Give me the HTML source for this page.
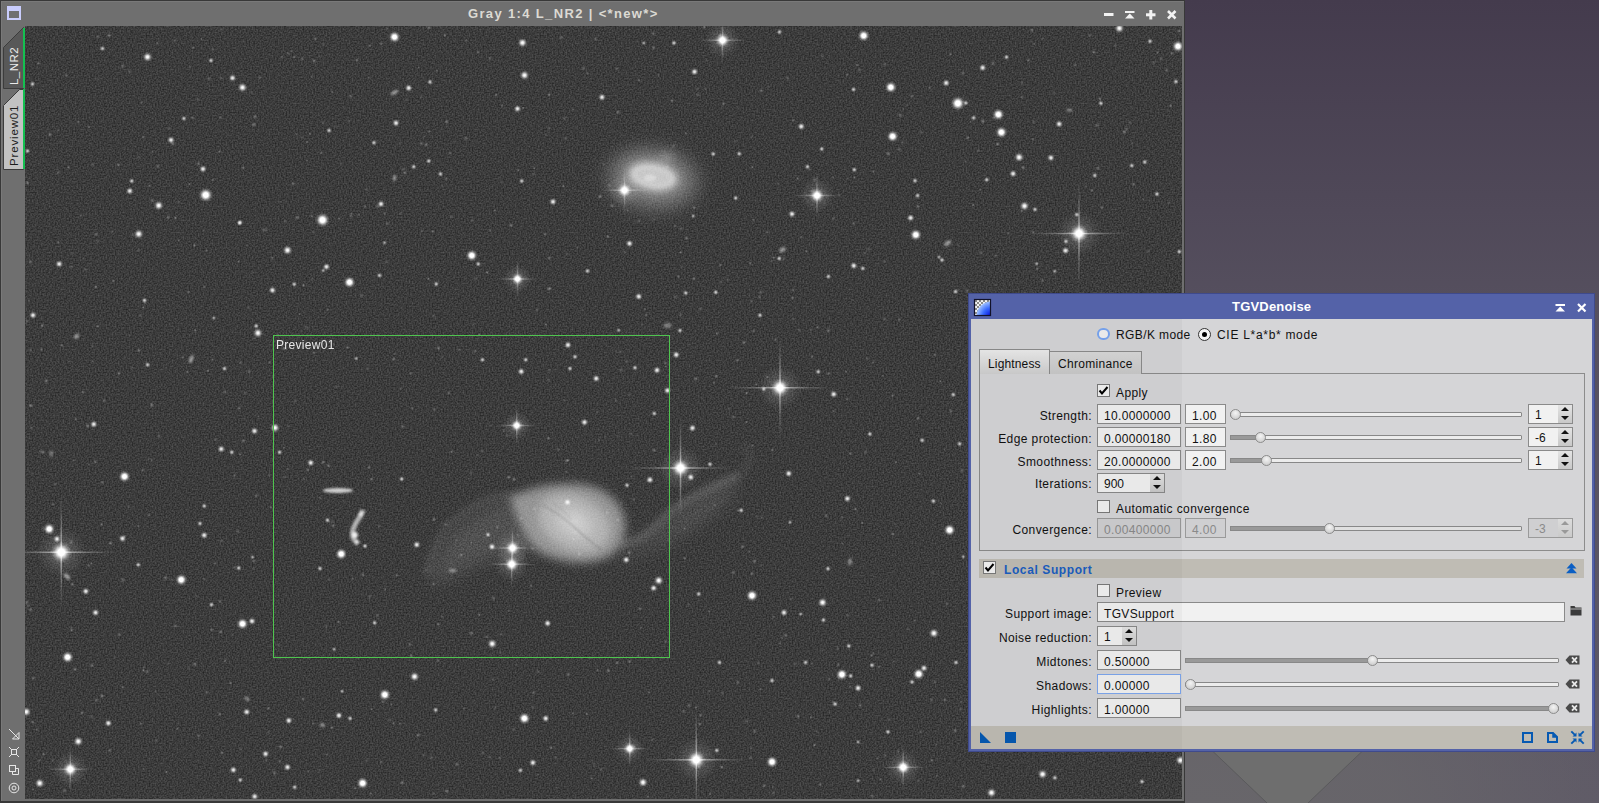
<!DOCTYPE html>
<html><head><meta charset="utf-8">
<style>
*{box-sizing:border-box;margin:0;padding:0}
html,body{width:1599px;height:803px;overflow:hidden}
body{position:relative;font-family:"Liberation Sans",sans-serif;font-size:12px;color:#111;
 background:radial-gradient(ellipse 480px 230px at 1200px 803px,rgba(104,102,106,1) 0%,rgba(104,102,106,0.85) 40%,rgba(104,102,106,0) 100%),linear-gradient(180deg,#443b4d 0px,#554f5e 300px,#5b5664 600px,#5d5866 803px)}
.a{position:absolute}
#bgshade{left:1185px;top:600px;width:414px;height:203px;background:linear-gradient(180deg,rgba(106,104,108,0) 0%,rgba(106,104,108,0.0) 30%,rgba(106,104,108,1) 100%)}
#win{left:0;top:0;width:1185px;height:803px;background:#6f6f6f;border:1px solid #383838;border-bottom-width:2px;box-shadow:inset 1px 1px 0 #797979}
#wtitle{left:468px;top:6px;font-weight:bold;font-size:13px;color:#dcdad4;white-space:nowrap;letter-spacing:1.35px}
#img{position:absolute;left:25px;top:26px}
.wb{background:#f2f2f2}
.lbl{position:absolute;white-space:nowrap;letter-spacing:0.4px}
.r{text-align:right}
#dlg{left:968px;top:293px;width:627px;height:459px;background:#5462a8;border:1px solid #3f4a8c}
#dcontent{left:971px;top:319px;width:621px;height:430px;background:#d5d5d7}
#dfoot{left:971px;top:726px;width:621px;height:23px;background:#bfbcb4}
.tf{position:absolute;height:20px;background:#f1f1f1;border:1px solid #8a8a8a;padding-left:6px;padding-top:2px;line-height:18px;letter-spacing:0.35px}
.tf.dis{background:#cfcfd1;color:#8a8a8a;border-color:#9a9a9a}
.trk{position:absolute;height:5px;background:#ececec;border:1px solid #888;border-radius:1px}
.fill{position:absolute;height:5px;background:#999;border:1px solid #888}
.hnd{position:absolute;width:11px;height:11px;border-radius:50%;background:radial-gradient(circle at 50% 35%,#f4f4f4,#c4c4c4);border:1px solid #8c8c8c}
.spin{position:absolute;height:20px;background:#f1f1f1;border:1px solid #8a8a8a;padding-left:6px;padding-top:1px;line-height:18px}
.spb{position:absolute;top:0;right:0;width:14px;height:18px;background:linear-gradient(#e4e4e4,#c8c8c8)}
.up{position:absolute;left:3px;top:2px;width:0;height:0;border-left:4px solid transparent;border-right:4px solid transparent;border-bottom:4px solid #111}
.dn{position:absolute;left:3px;top:11px;width:0;height:0;border-left:4px solid transparent;border-right:4px solid transparent;border-top:4px solid #111}
.cb{position:absolute;width:13px;height:13px;background:#f2f2f2;border:1px solid #7a7a7a}
.clr{position:absolute;width:15px;height:10px}
</style></head><body>

<svg class="a" style="left:1185px;top:751px" width="414" height="52" viewBox="1185 751 414 52">
 <polygon points="1212.5,751 1362.5,751 1308,803 1267,803" fill="#6e6e6e"/>
 <polyline points="1212.5,751 1267,803" stroke="#5a5a5c" stroke-width="1" fill="none"/>
 <polyline points="1362.5,751 1308,803" stroke="#5a5a5c" stroke-width="1" fill="none"/>
</svg>

<div class="a" id="win"></div>
<!-- window title icon -->
<div class="a" style="left:7px;top:6px;width:14px;height:14px;background:#c9cdfd"></div>
<div class="a" style="left:9px;top:11px;width:10px;height:7px;background:#6f6f72"></div>
<div class="a" id="wtitle">Gray 1:4 L_NR2 | &lt;*new*&gt;</div>
<!-- window buttons -->
<svg class="a" style="left:1100px;top:6px" width="84" height="18" viewBox="1100 6 84 18">
 <rect x="1104" y="13" width="9.5" height="3" fill="#f2f2f2"/>
 <rect x="1125" y="11" width="9.5" height="2" fill="#f2f2f2"/>
 <polygon points="1125,18.5 1134.5,18.5 1129.75,13.5" fill="#f2f2f2"/>
 <rect x="1146" y="13.3" width="9.5" height="3" fill="#f2f2f2"/>
 <rect x="1149.3" y="10" width="3" height="9.5" fill="#f2f2f2"/>
 <path d="M1168,11 L1175.5,18.5 M1175.5,11 L1168,18.5" stroke="#f2f2f2" stroke-width="2.6"/>
</svg>
<!-- side tabs -->
<svg class="a" style="left:0;top:26px" width="26" height="150" viewBox="0 26 26 150">
 <polygon points="3.5,88.5 3.5,47.5 23.5,27.5 23.5,88.5" fill="#585858" stroke="#3c3c3c" stroke-width="1"/>
 <polygon points="3.5,169.5 3.5,105.5 19.5,89.5 23.5,89.5 23.5,169.5" fill="#c2c2c2" stroke="#3c3c3c" stroke-width="1"/>
 <rect x="23" y="28" width="2" height="60" fill="#14c050"/>
 <rect x="23" y="89" width="2" height="80" fill="#14c050"/>
</svg>
<div class="a" style="left:3px;top:85.5px;width:72px;height:22px;transform-origin:0 0;transform:rotate(-90deg);color:#ececec;font-size:11.5px;line-height:22px;padding-left:1px;letter-spacing:0.45px">L_NR2</div>
<div class="a" style="left:3px;top:167px;width:80px;height:22px;transform-origin:0 0;transform:rotate(-90deg);color:#1c1c1c;font-size:11.5px;line-height:22px;padding-left:1px;letter-spacing:0.85px">Preview01</div>
<!-- bottom-left tool icons -->
<svg class="a" style="left:4px;top:724px" width="20" height="74" viewBox="4 724 20 74" fill="none" stroke="#e6e6e6" stroke-width="1">
 <path d="M9,729 L19,739 M19,732.5 L19,739 L12.5,739 Z"/>
 <rect x="11.5" y="749.5" width="5" height="5"/>
 <path d="M9,747 L11.5,749.5 M19,747 L16.5,749.5 M9,757 L11.5,754.5 M19,757 L16.5,754.5"/>
 <rect x="9.5" y="765.5" width="6" height="6"/>
 <path d="M15.5,768.5 L18.5,768.5 L18.5,774.5 L12.5,774.5 L12.5,771.5"/>
 <circle cx="14" cy="788" r="4.8"/>
 <circle cx="14" cy="788" r="2"/>
</svg>
<svg id="img" width="1157" height="773" viewBox="25 26 1157 773">
<defs>
 <radialGradient id="sg"><stop offset="0" stop-color="#fff"/><stop offset="0.2" stop-color="#fff" stop-opacity="0.92"/><stop offset="0.4" stop-color="#fff" stop-opacity="0.6"/><stop offset="0.6" stop-color="#fff" stop-opacity="0.28"/><stop offset="0.8" stop-color="#fff" stop-opacity="0.08"/><stop offset="1" stop-color="#fff" stop-opacity="0"/></radialGradient>
 <radialGradient id="sgb"><stop offset="0" stop-color="#fff"/><stop offset="0.3" stop-color="#fff"/><stop offset="0.45" stop-color="#fff" stop-opacity="0.7"/><stop offset="0.65" stop-color="#fff" stop-opacity="0.28"/><stop offset="0.85" stop-color="#fff" stop-opacity="0.07"/><stop offset="1" stop-color="#fff" stop-opacity="0"/></radialGradient>
 <radialGradient id="halo"><stop offset="0" stop-color="#fff" stop-opacity="0.22"/><stop offset="1" stop-color="#fff" stop-opacity="0"/></radialGradient>
 <linearGradient id="sph"><stop offset="0" stop-color="#fff" stop-opacity="0"/><stop offset="0.2" stop-color="#fff" stop-opacity="0.2"/><stop offset="0.4" stop-color="#fff" stop-opacity="0.5"/><stop offset="0.5" stop-color="#fff"/><stop offset="0.6" stop-color="#fff" stop-opacity="0.5"/><stop offset="0.8" stop-color="#fff" stop-opacity="0.2"/><stop offset="1" stop-color="#fff" stop-opacity="0"/></linearGradient>
 <linearGradient id="spv" x1="0" y1="0" x2="0" y2="1"><stop offset="0" stop-color="#fff" stop-opacity="0"/><stop offset="0.2" stop-color="#fff" stop-opacity="0.2"/><stop offset="0.4" stop-color="#fff" stop-opacity="0.5"/><stop offset="0.5" stop-color="#fff"/><stop offset="0.6" stop-color="#fff" stop-opacity="0.5"/><stop offset="0.8" stop-color="#fff" stop-opacity="0.2"/><stop offset="1" stop-color="#fff" stop-opacity="0"/></linearGradient>
 <filter id="blur1" x="-50%" y="-50%" width="200%" height="200%"><feGaussianBlur stdDeviation="1"/></filter>
 <filter id="blur3" x="-50%" y="-50%" width="200%" height="200%"><feGaussianBlur stdDeviation="3"/></filter>
 <filter id="blur4" x="-50%" y="-50%" width="200%" height="200%"><feGaussianBlur stdDeviation="5"/></filter>
 <filter id="blur6" x="-50%" y="-50%" width="200%" height="200%"><feGaussianBlur stdDeviation="8"/></filter>
 <filter id="noise" x="0" y="0" width="100%" height="100%" color-interpolation-filters="sRGB"><feTurbulence type="fractalNoise" baseFrequency="0.65" numOctaves="1" seed="4"/><feColorMatrix type="matrix" values="0.62 0 0 0 -0.067  0.62 0 0 0 -0.067  0.62 0 0 0 -0.067  0 0 0 0 0.5"/><feGaussianBlur stdDeviation="0.7"/></filter>
</defs>
<rect x="25" y="26" width="1157" height="773" fill="#3a3a3a"/>
<rect x="25" y="26" width="1157" height="773" filter="url(#noise)"/>

<!-- top galaxy -->
<g filter="url(#blur6)">
 <ellipse cx="653" cy="179" rx="48" ry="33" fill="#fff" opacity="0.2" transform="rotate(6 653 179)"/>
 <ellipse cx="653" cy="177" rx="32" ry="20" fill="#fff" opacity="0.3" transform="rotate(10 653 177)"/>
</g>
<g filter="url(#blur3)">
 <ellipse cx="653" cy="176.5" rx="25" ry="14" fill="#fff" opacity="0.5" transform="rotate(10 653 176.5)"/>
 <ellipse cx="667" cy="157" rx="8" ry="6" fill="#fff" opacity="0.15"/>
</g>
<g filter="url(#blur1)">
 <ellipse cx="653" cy="176.5" rx="19" ry="9" fill="none" stroke="#fff" stroke-width="5" opacity="0.12" transform="rotate(10 653 176.5)"/>
 <ellipse cx="650" cy="178" rx="6" ry="3.5" fill="#fff" opacity="0.3"/>
</g>
<!-- main galaxy arms -->
<g filter="url(#blur6)" fill="#fff" stroke="none">
 <path d="M515,499 C495,500 470,515 452,532 C440,548 432,565 430,585 C450,580 470,565 500,557 C520,552 535,550 545,553 C530,540 520,520 515,499 Z" opacity="0.11"/>
 <path d="M615,553 C640,548 660,530 680,512 C700,496 720,486 740,478 C735,500 715,515 690,530 C665,545 640,556 615,560 Z" opacity="0.10"/>
</g>
<g filter="url(#blur3)" fill="none" stroke="#fff">
 <path d="M518,497 C498,492 476,503 456,518 C440,532 432,550 427,575" stroke-width="8" opacity="0.07"/>
 <path d="M620,545 C640,542 655,528 668,514 C685,500 705,490 738,476" stroke-width="8" opacity="0.14"/>
 <path d="M735,478 C752,468 755,452 742,445" stroke-width="8" opacity="0.05"/>
</g>
<g filter="url(#blur4)">
 <path d="M510,498 C530,487 555,483 578,484 C602,486 618,498 624,516 C628,534 622,550 606,558 C588,566 562,563 543,554 C526,544 518,522 510,498 Z" fill="#fff" opacity="0.45"/>
</g>
<g filter="url(#blur4)">
 <ellipse cx="574" cy="523" rx="38" ry="27" fill="#fff" opacity="0.3" transform="rotate(25 574 523)"/>
 <ellipse cx="574" cy="523" rx="20" ry="14" fill="#fff" opacity="0.25" transform="rotate(25 574 523)"/>
 <circle cx="575" cy="522" r="5" fill="#fff" opacity="0.3"/>
</g>
<g filter="url(#blur1)" fill="none">
 <path d="M543,505 C556,512 566,520 573,526 C583,535 592,544 602,550" stroke="#000" stroke-width="1.4" opacity="0.18"/>
 <path d="M552,502 C560,508 566,513 571,519" stroke="#000" stroke-width="1.2" opacity="0.1"/>
</g>
<!-- edge-on & curved -->
<g filter="url(#blur1)">
 <ellipse cx="338" cy="490.5" rx="15" ry="2.4" fill="#fff" opacity="0.75"/>
 <path d="M363,510 C361,517 355,522 353,530 C351,537 355,541 358,544" stroke="#fff" stroke-width="5" fill="none" opacity="0.6"/>
 <circle cx="355" cy="535" r="3" fill="#fff" opacity="0.85"/><circle cx="361" cy="514" r="2.5" fill="#fff" opacity="0.6"/>
 <circle cx="357" cy="542" r="2" fill="#fff" opacity="0.7"/>
</g>
<g filter="url(#blur1)" fill="#fff">
 <ellipse cx="394.5" cy="92.5" rx="4" ry="1.8" opacity="0.5" transform="rotate(-30 394.5 92.5)"/>
 <ellipse cx="1069.4" cy="110" rx="3" ry="1.6" opacity="0.4"/>
 <ellipse cx="947.7" cy="243.2" rx="4" ry="2" opacity="0.5" transform="rotate(-35 947.7 243.2)"/>
 <ellipse cx="782.5" cy="249.75" rx="3.5" ry="2" opacity="0.5" transform="rotate(-35 782.5 249.75)"/>
 <ellipse cx="76.25" cy="336.5" rx="3" ry="2" opacity="0.5" transform="rotate(-35 76 336)"/>
 <ellipse cx="191.25" cy="359" rx="2" ry="4" opacity="0.5" transform="rotate(20 191 359)"/>
 <ellipse cx="667.5" cy="325.5" rx="4" ry="2.5" opacity="0.35"/>
 <ellipse cx="452.5" cy="570.5" rx="4" ry="1.8" opacity="0.4"/>
 <ellipse cx="850" cy="561.7" rx="2" ry="3.5" opacity="0.4"/>
 <ellipse cx="322.1" cy="725.1" rx="2.5" ry="2" opacity="0.4"/>
 <ellipse cx="247.5" cy="698.5" rx="3" ry="1.8" opacity="0.4" transform="rotate(35 247 698)"/>
 <ellipse cx="51.25" cy="453.5" rx="1.8" ry="3" opacity="0.35"/>
 <ellipse cx="394.5" cy="178" rx="1.6" ry="3" opacity="0.5"/>
 <ellipse cx="67" cy="576.5" rx="4" ry="2" opacity="0.5" transform="rotate(45 67 576.5)"/>
</g>

<circle cx="394.5" cy="37" r="6.4" fill="url(#sgb)" opacity="1.0"/>
<circle cx="147.5" cy="57" r="5.4" fill="url(#sg)" opacity="1.0"/>
<circle cx="102.5" cy="48.5" r="3.3" fill="url(#sg)" opacity="0.7"/>
<circle cx="211" cy="60.5" r="3.3" fill="url(#sg)" opacity="0.7"/>
<circle cx="232.5" cy="78" r="4.3" fill="url(#sg)" opacity="0.9"/>
<circle cx="242.5" cy="87.5" r="5.4" fill="url(#sg)" opacity="1.0"/>
<circle cx="32.5" cy="84" r="3.3" fill="url(#sg)" opacity="0.7"/>
<circle cx="408.7" cy="88" r="4.3" fill="url(#sg)" opacity="0.9"/>
<circle cx="396" cy="123" r="4.3" fill="url(#sg)" opacity="0.9"/>
<circle cx="329" cy="130.5" r="3.3" fill="url(#sg)" opacity="0.7"/>
<circle cx="374" cy="142.7" r="3.3" fill="url(#sg)" opacity="0.7"/>
<circle cx="171" cy="140" r="4.3" fill="url(#sg)" opacity="0.9"/>
<circle cx="184" cy="118.5" r="3.3" fill="url(#sg)" opacity="0.7"/>
<circle cx="27.5" cy="151" r="3.3" fill="url(#sg)" opacity="0.7"/>
<circle cx="203" cy="169" r="4.3" fill="url(#sg)" opacity="0.9"/>
<circle cx="131.75" cy="181" r="3.3" fill="url(#sg)" opacity="0.7"/>
<circle cx="129.75" cy="191" r="4.3" fill="url(#sg)" opacity="0.9"/>
<circle cx="205.75" cy="195" r="7.8" fill="url(#sgb)" opacity="1.0"/>
<circle cx="158.75" cy="205.5" r="5.4" fill="url(#sg)" opacity="1.0"/>
<circle cx="322.5" cy="220" r="7.8" fill="url(#sgb)" opacity="1.0"/>
<circle cx="413.75" cy="166.75" r="3.3" fill="url(#sg)" opacity="0.7"/>
<circle cx="381" cy="204" r="4.3" fill="url(#sg)" opacity="0.9"/>
<circle cx="240" cy="222.5" r="3.3" fill="url(#sg)" opacity="0.7"/>
<circle cx="522.5" cy="42.75" r="5.4" fill="url(#sg)" opacity="1.0"/>
<rect x="698.0" y="39.50" width="49.0" height="1.5" fill="url(#sph)" opacity="0.7"/>
<rect x="721.75" y="15.8" width="1.5" height="49.0" fill="url(#spv)" opacity="0.7"/>
<circle cx="722.5" cy="40.25" r="17.2" fill="url(#halo)"/>
<circle cx="722.5" cy="40.25" r="7.8" fill="url(#sgb)" opacity="1.0"/>
<circle cx="524.5" cy="75.25" r="5.4" fill="url(#sg)" opacity="1.0"/>
<circle cx="517.5" cy="108.75" r="4.3" fill="url(#sg)" opacity="0.9"/>
<circle cx="602" cy="97.25" r="4.3" fill="url(#sg)" opacity="0.9"/>
<circle cx="694.5" cy="71.75" r="4.3" fill="url(#sg)" opacity="0.9"/>
<circle cx="674" cy="43" r="3.3" fill="url(#sg)" opacity="0.7"/>
<circle cx="643.75" cy="43" r="2.8" fill="url(#sg)" opacity="0.55"/>
<circle cx="801.25" cy="126.5" r="4.3" fill="url(#sg)" opacity="0.9"/>
<circle cx="821.75" cy="149" r="3.3" fill="url(#sg)" opacity="0.7"/>
<circle cx="807.5" cy="166.75" r="3.3" fill="url(#sg)" opacity="0.7"/>
<rect x="792.5" y="194.75" width="49.0" height="1.5" fill="url(#sph)" opacity="0.7"/>
<rect x="816.25" y="171.0" width="1.5" height="49.0" fill="url(#spv)" opacity="0.7"/>
<circle cx="817" cy="195.5" r="17.2" fill="url(#halo)"/>
<circle cx="817" cy="195.5" r="7.8" fill="url(#sgb)" opacity="1.0"/>
<circle cx="792" cy="214" r="4.3" fill="url(#sg)" opacity="0.9"/>
<rect x="600.0" y="189.50" width="49.0" height="1.5" fill="url(#sph)" opacity="0.7"/>
<rect x="623.75" y="165.8" width="1.5" height="49.0" fill="url(#spv)" opacity="0.7"/>
<circle cx="624.5" cy="190.25" r="17.2" fill="url(#halo)"/>
<circle cx="624.5" cy="190.25" r="7.8" fill="url(#sgb)" opacity="1.0"/>
<circle cx="553" cy="201.75" r="4.3" fill="url(#sg)" opacity="0.9"/>
<circle cx="440.5" cy="174" r="3.3" fill="url(#sg)" opacity="0.7"/>
<circle cx="428.75" cy="161" r="3.3" fill="url(#sg)" opacity="0.7"/>
<circle cx="521.75" cy="181" r="3.3" fill="url(#sg)" opacity="0.7"/>
<circle cx="713.25" cy="154" r="3.3" fill="url(#sg)" opacity="0.7"/>
<circle cx="739.25" cy="153.75" r="3.3" fill="url(#sg)" opacity="0.7"/>
<circle cx="735.75" cy="198" r="3.3" fill="url(#sg)" opacity="0.7"/>
<circle cx="430" cy="82" r="3.3" fill="url(#sg)" opacity="0.7"/>
<circle cx="779.5" cy="32" r="3.3" fill="url(#sg)" opacity="0.7"/>
<circle cx="863.7" cy="35.7" r="6.4" fill="url(#sgb)" opacity="1.0"/>
<circle cx="1119.4" cy="28.3" r="5.4" fill="url(#sg)" opacity="1.0"/>
<circle cx="1178" cy="46.3" r="6.4" fill="url(#sgb)" opacity="1.0"/>
<circle cx="1150" cy="41.3" r="3.3" fill="url(#sg)" opacity="0.7"/>
<circle cx="890.8" cy="87.3" r="6.4" fill="url(#sgb)" opacity="1.0"/>
<circle cx="957.9" cy="103.3" r="7.8" fill="url(#sgb)" opacity="1.0"/>
<circle cx="965.8" cy="103" r="3.3" fill="url(#sg)" opacity="0.7"/>
<circle cx="998.4" cy="114.5" r="6.4" fill="url(#sgb)" opacity="1.0"/>
<circle cx="1001.4" cy="132.3" r="6.4" fill="url(#sgb)" opacity="1.0"/>
<circle cx="892.6" cy="136.4" r="6.4" fill="url(#sgb)" opacity="1.0"/>
<circle cx="982.7" cy="67.7" r="4.3" fill="url(#sg)" opacity="0.9"/>
<circle cx="946.2" cy="83" r="4.3" fill="url(#sg)" opacity="0.9"/>
<circle cx="1006.5" cy="57.1" r="3.3" fill="url(#sg)" opacity="0.7"/>
<circle cx="1059.2" cy="124" r="4.3" fill="url(#sg)" opacity="0.9"/>
<circle cx="1019.1" cy="157.3" r="5.4" fill="url(#sg)" opacity="1.0"/>
<circle cx="1050.9" cy="157.8" r="4.3" fill="url(#sg)" opacity="0.9"/>
<circle cx="1013.1" cy="173.7" r="4.3" fill="url(#sg)" opacity="0.9"/>
<circle cx="854.3" cy="169.7" r="3.3" fill="url(#sg)" opacity="0.7"/>
<circle cx="986.7" cy="179.8" r="3.3" fill="url(#sg)" opacity="0.7"/>
<circle cx="917.6" cy="195.6" r="3.3" fill="url(#sg)" opacity="0.7"/>
<circle cx="1094.8" cy="175.5" r="3.3" fill="url(#sg)" opacity="0.7"/>
<circle cx="1144.8" cy="162" r="3.3" fill="url(#sg)" opacity="0.7"/>
<circle cx="1131.8" cy="165.6" r="3.3" fill="url(#sg)" opacity="0.7"/>
<circle cx="1175.9" cy="81.6" r="3.3" fill="url(#sg)" opacity="0.7"/>
<circle cx="1100.9" cy="103.3" r="3.3" fill="url(#sg)" opacity="0.7"/>
<circle cx="973.6" cy="117.9" r="3.3" fill="url(#sg)" opacity="0.7"/>
<circle cx="1024.5" cy="206" r="5.4" fill="url(#sg)" opacity="1.0"/>
<circle cx="853.6" cy="89.5" r="3.3" fill="url(#sg)" opacity="0.7"/>
<circle cx="915" cy="180.7" r="3.3" fill="url(#sg)" opacity="0.7"/>
<circle cx="1157" cy="194" r="3.3" fill="url(#sg)" opacity="0.7"/>
<circle cx="138.75" cy="234" r="5.4" fill="url(#sg)" opacity="1.0"/>
<circle cx="239.5" cy="223" r="3.3" fill="url(#sg)" opacity="0.7"/>
<circle cx="287.5" cy="250.25" r="5.4" fill="url(#sg)" opacity="1.0"/>
<circle cx="326.5" cy="266.75" r="4.3" fill="url(#sg)" opacity="0.9"/>
<circle cx="323.25" cy="270.5" r="2.8" fill="url(#sg)" opacity="0.55"/>
<circle cx="349.5" cy="282.25" r="6.4" fill="url(#sgb)" opacity="1.0"/>
<circle cx="272.5" cy="290.25" r="4.3" fill="url(#sg)" opacity="0.9"/>
<circle cx="379.5" cy="275.5" r="3.3" fill="url(#sg)" opacity="0.7"/>
<circle cx="294.25" cy="284.25" r="3.3" fill="url(#sg)" opacity="0.7"/>
<circle cx="59.25" cy="264" r="4.3" fill="url(#sg)" opacity="0.9"/>
<circle cx="33" cy="315.25" r="4.3" fill="url(#sg)" opacity="0.9"/>
<circle cx="144.5" cy="300.25" r="3.3" fill="url(#sg)" opacity="0.7"/>
<circle cx="258" cy="333" r="5.4" fill="url(#sg)" opacity="1.0"/>
<circle cx="256.25" cy="326" r="3.3" fill="url(#sg)" opacity="0.7"/>
<circle cx="147.5" cy="364.75" r="3.3" fill="url(#sg)" opacity="0.7"/>
<circle cx="224.5" cy="368.5" r="3.3" fill="url(#sg)" opacity="0.7"/>
<circle cx="384.5" cy="242.75" r="2.8" fill="url(#sg)" opacity="0.55"/>
<circle cx="213.75" cy="318" r="2.8" fill="url(#sg)" opacity="0.55"/>
<circle cx="356.25" cy="358.5" r="2.8" fill="url(#sg)" opacity="0.55"/>
<circle cx="471.75" cy="255.5" r="6.4" fill="url(#sgb)" opacity="1.0"/>
<circle cx="478.25" cy="264" r="3.3" fill="url(#sg)" opacity="0.7"/>
<rect x="496.5" y="278.25" width="42.0" height="1.5" fill="url(#sph)" opacity="0.7"/>
<rect x="516.75" y="258.0" width="1.5" height="42.0" fill="url(#spv)" opacity="0.7"/>
<circle cx="517.5" cy="279" r="14.1" fill="url(#halo)"/>
<circle cx="517.5" cy="279" r="6.4" fill="url(#sgb)" opacity="1.0"/>
<circle cx="436.25" cy="284" r="3.3" fill="url(#sg)" opacity="0.7"/>
<circle cx="629.5" cy="243.5" r="4.3" fill="url(#sg)" opacity="0.9"/>
<circle cx="779.25" cy="258.5" r="3.3" fill="url(#sg)" opacity="0.7"/>
<circle cx="587.5" cy="271" r="3.3" fill="url(#sg)" opacity="0.7"/>
<circle cx="638.75" cy="296.5" r="4.3" fill="url(#sg)" opacity="0.9"/>
<circle cx="685.75" cy="293" r="3.3" fill="url(#sg)" opacity="0.7"/>
<circle cx="715.75" cy="292.25" r="3.3" fill="url(#sg)" opacity="0.7"/>
<circle cx="760" cy="315.25" r="3.3" fill="url(#sg)" opacity="0.7"/>
<circle cx="680" cy="330.5" r="3.3" fill="url(#sg)" opacity="0.7"/>
<circle cx="568" cy="345" r="4.3" fill="url(#sg)" opacity="0.9"/>
<circle cx="575" cy="356.75" r="3.3" fill="url(#sg)" opacity="0.7"/>
<circle cx="482.5" cy="359.75" r="3.3" fill="url(#sg)" opacity="0.7"/>
<circle cx="525.75" cy="359.75" r="3.3" fill="url(#sg)" opacity="0.7"/>
<circle cx="521.25" cy="371.5" r="4.3" fill="url(#sg)" opacity="0.9"/>
<circle cx="570" cy="368.5" r="3.3" fill="url(#sg)" opacity="0.7"/>
<circle cx="596.25" cy="378.5" r="4.3" fill="url(#sg)" opacity="0.9"/>
<circle cx="635" cy="367.75" r="3.3" fill="url(#sg)" opacity="0.7"/>
<circle cx="657" cy="370.25" r="4.3" fill="url(#sg)" opacity="0.9"/>
<circle cx="676.25" cy="354.75" r="4.3" fill="url(#sg)" opacity="0.9"/>
<circle cx="667.5" cy="390.5" r="4.3" fill="url(#sg)" opacity="0.9"/>
<rect x="728.0" y="387.00" width="104.0" height="1.5" fill="url(#sph)" opacity="0.85"/>
<rect x="779.25" y="335.8" width="1.5" height="104.0" fill="url(#spv)" opacity="0.85"/>
<circle cx="780" cy="387.75" r="22.0" fill="url(#halo)"/>
<circle cx="780" cy="387.75" r="10.0" fill="url(#sgb)" opacity="1.0"/>
<circle cx="763.75" cy="389" r="3.3" fill="url(#sg)" opacity="0.7"/>
<circle cx="818.25" cy="371.75" r="3.3" fill="url(#sg)" opacity="0.7"/>
<circle cx="618.75" cy="330.25" r="2.8" fill="url(#sg)" opacity="0.55"/>
<circle cx="693.25" cy="216" r="2.8" fill="url(#sg)" opacity="0.55"/>
<circle cx="915.8" cy="234.8" r="6.4" fill="url(#sgb)" opacity="1.0"/>
<circle cx="910.6" cy="217.9" r="4.3" fill="url(#sg)" opacity="0.9"/>
<rect x="1027.0" y="232.75" width="104.0" height="1.5" fill="url(#sph)" opacity="0.85"/>
<rect x="1078.25" y="181.5" width="1.5" height="104.0" fill="url(#spv)" opacity="0.85"/>
<circle cx="1079" cy="233.5" r="22.0" fill="url(#halo)"/>
<circle cx="1079" cy="233.5" r="10.0" fill="url(#sgb)" opacity="1.0"/>
<circle cx="1065.5" cy="250.6" r="4.3" fill="url(#sg)" opacity="0.9"/>
<circle cx="1076.8" cy="214.6" r="3.3" fill="url(#sg)" opacity="0.7"/>
<circle cx="1066" cy="241.4" r="3.3" fill="url(#sg)" opacity="0.7"/>
<circle cx="1035" cy="209.4" r="3.3" fill="url(#sg)" opacity="0.7"/>
<circle cx="853.8" cy="265.7" r="4.3" fill="url(#sg)" opacity="0.9"/>
<circle cx="862.8" cy="268.4" r="3.3" fill="url(#sg)" opacity="0.7"/>
<circle cx="828.4" cy="276.5" r="3.3" fill="url(#sg)" opacity="0.7"/>
<circle cx="1179.3" cy="251.7" r="3.3" fill="url(#sg)" opacity="0.7"/>
<circle cx="955.6" cy="291.6" r="3.3" fill="url(#sg)" opacity="0.7"/>
<circle cx="1054.7" cy="271.3" r="2.8" fill="url(#sg)" opacity="0.55"/>
<circle cx="1036.7" cy="263.7" r="2.8" fill="url(#sg)" opacity="0.55"/>
<circle cx="942" cy="260" r="3.3" fill="url(#sg)" opacity="0.7"/>
<circle cx="939" cy="257" r="2.8" fill="url(#sg)" opacity="0.55"/>
<rect x="2.8" y="551.50" width="117.0" height="1.5" fill="url(#sph)" opacity="0.85"/>
<rect x="60.50" y="493.8" width="1.5" height="117.0" fill="url(#spv)" opacity="0.85"/>
<circle cx="61.25" cy="552.25" r="24.8" fill="url(#halo)"/>
<circle cx="61.25" cy="552.25" r="11.2" fill="url(#sgb)" opacity="1.0"/>
<circle cx="49.25" cy="529" r="6.4" fill="url(#sgb)" opacity="1.0"/>
<circle cx="57" cy="539" r="4.3" fill="url(#sg)" opacity="0.9"/>
<circle cx="124.5" cy="476.5" r="6.4" fill="url(#sgb)" opacity="1.0"/>
<circle cx="93.75" cy="424.25" r="4.3" fill="url(#sg)" opacity="0.9"/>
<circle cx="275" cy="427.75" r="5.4" fill="url(#sg)" opacity="1.0"/>
<circle cx="254.5" cy="431" r="4.3" fill="url(#sg)" opacity="0.9"/>
<circle cx="221.25" cy="449" r="4.3" fill="url(#sg)" opacity="0.9"/>
<circle cx="231.75" cy="452.25" r="3.3" fill="url(#sg)" opacity="0.7"/>
<circle cx="279.5" cy="452.25" r="3.3" fill="url(#sg)" opacity="0.7"/>
<circle cx="310.75" cy="462.75" r="4.3" fill="url(#sg)" opacity="0.9"/>
<circle cx="401.75" cy="479" r="3.3" fill="url(#sg)" opacity="0.7"/>
<circle cx="200" cy="523.5" r="3.3" fill="url(#sg)" opacity="0.7"/>
<circle cx="204.25" cy="535.25" r="4.3" fill="url(#sg)" opacity="0.9"/>
<circle cx="122.5" cy="538.5" r="4.3" fill="url(#sg)" opacity="0.9"/>
<circle cx="181.25" cy="579.75" r="6.4" fill="url(#sgb)" opacity="1.0"/>
<circle cx="138.25" cy="564.75" r="3.3" fill="url(#sg)" opacity="0.7"/>
<circle cx="416.75" cy="544.75" r="4.3" fill="url(#sg)" opacity="0.9"/>
<circle cx="341.25" cy="554" r="6.4" fill="url(#sgb)" opacity="1.0"/>
<circle cx="327.5" cy="520.25" r="3.3" fill="url(#sg)" opacity="0.7"/>
<circle cx="204.25" cy="506" r="3.3" fill="url(#sg)" opacity="0.7"/>
<circle cx="238.75" cy="568" r="3.3" fill="url(#sg)" opacity="0.7"/>
<circle cx="252.5" cy="557.25" r="2.8" fill="url(#sg)" opacity="0.55"/>
<circle cx="320" cy="568.5" r="3.3" fill="url(#sg)" opacity="0.7"/>
<circle cx="365" cy="546" r="3.3" fill="url(#sg)" opacity="0.7"/>
<rect x="495.8" y="424.75" width="42.0" height="1.5" fill="url(#sph)" opacity="0.7"/>
<rect x="516.00" y="404.5" width="1.5" height="42.0" fill="url(#spv)" opacity="0.7"/>
<circle cx="516.75" cy="425.5" r="14.1" fill="url(#halo)"/>
<circle cx="516.75" cy="425.5" r="6.4" fill="url(#sgb)" opacity="1.0"/>
<circle cx="584.5" cy="422.25" r="4.3" fill="url(#sg)" opacity="0.9"/>
<circle cx="654.25" cy="413.5" r="3.3" fill="url(#sg)" opacity="0.7"/>
<circle cx="692.5" cy="428" r="4.3" fill="url(#sg)" opacity="0.9"/>
<rect x="628.5" y="467.25" width="104.0" height="1.5" fill="url(#sph)" opacity="0.85"/>
<rect x="679.75" y="416.0" width="1.5" height="104.0" fill="url(#spv)" opacity="0.85"/>
<circle cx="680.5" cy="468" r="22.0" fill="url(#halo)"/>
<circle cx="680.5" cy="468" r="10.0" fill="url(#sgb)" opacity="1.0"/>
<circle cx="690.75" cy="477.25" r="4.3" fill="url(#sg)" opacity="0.9"/>
<circle cx="710" cy="464.25" r="3.3" fill="url(#sg)" opacity="0.7"/>
<circle cx="788.75" cy="473.5" r="4.3" fill="url(#sg)" opacity="0.9"/>
<circle cx="650" cy="479.75" r="4.3" fill="url(#sg)" opacity="0.9"/>
<circle cx="627" cy="485.25" r="3.3" fill="url(#sg)" opacity="0.7"/>
<circle cx="567.5" cy="502.25" r="4.3" fill="url(#sg)" opacity="0.9"/>
<rect x="488.0" y="547.25" width="49.0" height="1.5" fill="url(#sph)" opacity="0.7"/>
<rect x="511.75" y="523.5" width="1.5" height="49.0" fill="url(#spv)" opacity="0.7"/>
<circle cx="512.5" cy="548" r="17.2" fill="url(#halo)"/>
<circle cx="512.5" cy="548" r="7.8" fill="url(#sgb)" opacity="1.0"/>
<rect x="487.2" y="563.50" width="49.0" height="1.5" fill="url(#sph)" opacity="0.7"/>
<rect x="511.00" y="539.8" width="1.5" height="49.0" fill="url(#spv)" opacity="0.7"/>
<circle cx="511.75" cy="564.25" r="17.2" fill="url(#halo)"/>
<circle cx="511.75" cy="564.25" r="7.8" fill="url(#sgb)" opacity="1.0"/>
<circle cx="492" cy="546.75" r="4.3" fill="url(#sg)" opacity="0.9"/>
<circle cx="488" cy="534.75" r="3.3" fill="url(#sg)" opacity="0.7"/>
<circle cx="626.25" cy="559.75" r="4.3" fill="url(#sg)" opacity="0.9"/>
<circle cx="658.75" cy="580.5" r="5.4" fill="url(#sg)" opacity="1.0"/>
<circle cx="741.25" cy="510.25" r="3.3" fill="url(#sg)" opacity="0.7"/>
<circle cx="790" cy="522.25" r="2.8" fill="url(#sg)" opacity="0.55"/>
<circle cx="949.6" cy="530" r="6.4" fill="url(#sgb)" opacity="1.0"/>
<circle cx="847.4" cy="498.6" r="4.3" fill="url(#sg)" opacity="0.9"/>
<circle cx="833.7" cy="394.2" r="4.3" fill="url(#sg)" opacity="0.9"/>
<circle cx="869.9" cy="434" r="3.3" fill="url(#sg)" opacity="0.7"/>
<circle cx="922.2" cy="440.3" r="3.3" fill="url(#sg)" opacity="0.7"/>
<circle cx="959.6" cy="443.8" r="3.3" fill="url(#sg)" opacity="0.7"/>
<circle cx="933.4" cy="501.1" r="3.3" fill="url(#sg)" opacity="0.7"/>
<circle cx="953.3" cy="394.7" r="3.3" fill="url(#sg)" opacity="0.7"/>
<circle cx="828" cy="568.7" r="3.3" fill="url(#sg)" opacity="0.7"/>
<circle cx="963.3" cy="556.7" r="2.8" fill="url(#sg)" opacity="0.55"/>
<circle cx="85.8" cy="591.3" r="4.3" fill="url(#sg)" opacity="0.9"/>
<circle cx="95.6" cy="612.6" r="4.3" fill="url(#sg)" opacity="0.9"/>
<circle cx="67.6" cy="657.2" r="6.4" fill="url(#sgb)" opacity="1.0"/>
<circle cx="242.5" cy="623.8" r="6.4" fill="url(#sgb)" opacity="1.0"/>
<circle cx="252" cy="621.2" r="4.3" fill="url(#sg)" opacity="0.9"/>
<circle cx="26.3" cy="711.8" r="5.4" fill="url(#sg)" opacity="1.0"/>
<circle cx="108.4" cy="723.2" r="4.3" fill="url(#sg)" opacity="0.9"/>
<circle cx="78.3" cy="741.4" r="5.4" fill="url(#sg)" opacity="1.0"/>
<rect x="45.8" y="768.55" width="49.0" height="1.5" fill="url(#sph)" opacity="0.7"/>
<rect x="69.55" y="744.8" width="1.5" height="49.0" fill="url(#spv)" opacity="0.7"/>
<circle cx="70.3" cy="769.3" r="17.2" fill="url(#halo)"/>
<circle cx="70.3" cy="769.3" r="7.8" fill="url(#sgb)" opacity="1.0"/>
<circle cx="39.7" cy="783.2" r="5.4" fill="url(#sg)" opacity="1.0"/>
<circle cx="246.7" cy="712" r="4.3" fill="url(#sg)" opacity="0.9"/>
<circle cx="288.8" cy="720.6" r="4.3" fill="url(#sg)" opacity="0.9"/>
<circle cx="265.6" cy="753.9" r="4.3" fill="url(#sg)" opacity="0.9"/>
<circle cx="287.5" cy="767.2" r="4.3" fill="url(#sg)" opacity="0.9"/>
<circle cx="233.4" cy="769.9" r="4.3" fill="url(#sg)" opacity="0.9"/>
<circle cx="294.7" cy="787.2" r="3.3" fill="url(#sg)" opacity="0.7"/>
<circle cx="254.7" cy="796.5" r="4.3" fill="url(#sg)" opacity="0.9"/>
<circle cx="338.9" cy="715.5" r="4.3" fill="url(#sg)" opacity="0.9"/>
<circle cx="350.1" cy="718.4" r="3.3" fill="url(#sg)" opacity="0.7"/>
<circle cx="384.8" cy="694.7" r="6.4" fill="url(#sgb)" opacity="1.0"/>
<circle cx="414.6" cy="676.6" r="5.4" fill="url(#sg)" opacity="1.0"/>
<circle cx="362.6" cy="783.2" r="6.4" fill="url(#sgb)" opacity="1.0"/>
<circle cx="374.6" cy="622.8" r="3.3" fill="url(#sg)" opacity="0.7"/>
<circle cx="342.1" cy="691.3" r="2.8" fill="url(#sg)" opacity="0.55"/>
<circle cx="334.1" cy="649.2" r="2.8" fill="url(#sg)" opacity="0.55"/>
<circle cx="211.5" cy="604.7" r="3.3" fill="url(#sg)" opacity="0.7"/>
<circle cx="240.3" cy="780" r="3.3" fill="url(#sg)" opacity="0.7"/>
<circle cx="752" cy="595.6" r="6.4" fill="url(#sgb)" opacity="1.0"/>
<circle cx="822.6" cy="602.5" r="5.4" fill="url(#sg)" opacity="1.0"/>
<circle cx="784" cy="612.6" r="4.3" fill="url(#sg)" opacity="0.9"/>
<circle cx="492.2" cy="643.8" r="5.4" fill="url(#sg)" opacity="1.0"/>
<circle cx="547.6" cy="623.3" r="4.3" fill="url(#sg)" opacity="0.9"/>
<circle cx="524.4" cy="718.4" r="6.4" fill="url(#sgb)" opacity="1.0"/>
<circle cx="545.7" cy="718.4" r="4.3" fill="url(#sg)" opacity="0.9"/>
<rect x="608.7" y="747.85" width="42.0" height="1.5" fill="url(#sph)" opacity="0.7"/>
<rect x="628.95" y="727.6" width="1.5" height="42.0" fill="url(#spv)" opacity="0.7"/>
<circle cx="629.7" cy="748.6" r="14.1" fill="url(#halo)"/>
<circle cx="629.7" cy="748.6" r="6.4" fill="url(#sgb)" opacity="1.0"/>
<rect x="644.3" y="759.05" width="104.0" height="1.5" fill="url(#sph)" opacity="0.85"/>
<rect x="695.55" y="707.8" width="1.5" height="104.0" fill="url(#spv)" opacity="0.85"/>
<circle cx="696.3" cy="759.8" r="22.0" fill="url(#halo)"/>
<circle cx="696.3" cy="759.8" r="10.0" fill="url(#sgb)" opacity="1.0"/>
<circle cx="772" cy="761.9" r="6.4" fill="url(#sgb)" opacity="1.0"/>
<circle cx="643" cy="782.4" r="5.4" fill="url(#sg)" opacity="1.0"/>
<circle cx="532.9" cy="762.7" r="4.3" fill="url(#sg)" opacity="0.9"/>
<circle cx="520.4" cy="770.4" r="3.3" fill="url(#sg)" opacity="0.7"/>
<circle cx="716.8" cy="750.4" r="3.3" fill="url(#sg)" opacity="0.7"/>
<circle cx="435.7" cy="709.9" r="3.3" fill="url(#sg)" opacity="0.7"/>
<circle cx="653.6" cy="588.1" r="4.3" fill="url(#sg)" opacity="0.9"/>
<circle cx="698.7" cy="594" r="3.3" fill="url(#sg)" opacity="0.7"/>
<circle cx="719.5" cy="662.5" r="3.3" fill="url(#sg)" opacity="0.7"/>
<circle cx="772" cy="680.6" r="3.3" fill="url(#sg)" opacity="0.7"/>
<circle cx="805.6" cy="662.5" r="3.3" fill="url(#sg)" opacity="0.7"/>
<circle cx="800.7" cy="614" r="2.8" fill="url(#sg)" opacity="0.55"/>
<circle cx="823.5" cy="620.1" r="3.3" fill="url(#sg)" opacity="0.7"/>
<circle cx="933.9" cy="633.2" r="5.4" fill="url(#sg)" opacity="1.0"/>
<circle cx="841.9" cy="674.5" r="6.4" fill="url(#sgb)" opacity="1.0"/>
<circle cx="850.7" cy="675.9" r="3.3" fill="url(#sg)" opacity="0.7"/>
<circle cx="858.1" cy="688.1" r="4.3" fill="url(#sg)" opacity="0.9"/>
<circle cx="835.2" cy="704.1" r="3.3" fill="url(#sg)" opacity="0.7"/>
<circle cx="918.7" cy="674" r="6.4" fill="url(#sgb)" opacity="1.0"/>
<circle cx="924" cy="668.1" r="4.3" fill="url(#sg)" opacity="0.9"/>
<circle cx="912" cy="682" r="3.3" fill="url(#sg)" opacity="0.7"/>
<circle cx="848.8" cy="646" r="3.3" fill="url(#sg)" opacity="0.7"/>
<circle cx="872" cy="665.2" r="3.3" fill="url(#sg)" opacity="0.7"/>
<circle cx="956" cy="662.5" r="3.3" fill="url(#sg)" opacity="0.7"/>
<circle cx="888" cy="731.9" r="3.3" fill="url(#sg)" opacity="0.7"/>
<rect x="878.7" y="766.55" width="49.0" height="1.5" fill="url(#sph)" opacity="0.7"/>
<rect x="902.45" y="742.8" width="1.5" height="49.0" fill="url(#spv)" opacity="0.7"/>
<circle cx="903.2" cy="767.3" r="17.2" fill="url(#halo)"/>
<circle cx="903.2" cy="767.3" r="7.8" fill="url(#sgb)" opacity="1.0"/>
<circle cx="858.1" cy="742" r="2.8" fill="url(#sg)" opacity="0.55"/>
<circle cx="858.1" cy="780.7" r="2.8" fill="url(#sg)" opacity="0.55"/>
<circle cx="991.5" cy="792.7" r="5.4" fill="url(#sg)" opacity="1.0"/>
<circle cx="1042.6" cy="774.2" r="5.4" fill="url(#sg)" opacity="1.0"/>
<circle cx="1054.9" cy="777.8" r="3.3" fill="url(#sg)" opacity="0.7"/>
<circle cx="1142" cy="781.6" r="3.3" fill="url(#sg)" opacity="0.7"/>
<circle cx="1180.4" cy="760.3" r="5.4" fill="url(#sg)" opacity="1.0"/>
<circle cx="400.0" cy="143.3" r="2.6" fill="url(#sg)" opacity="0.13"/>
<circle cx="644.9" cy="308.9" r="1.9" fill="url(#sg)" opacity="0.21"/>
<circle cx="69.3" cy="361.3" r="1.9" fill="url(#sg)" opacity="0.14"/>
<circle cx="516.3" cy="664.5" r="1.9" fill="url(#sg)" opacity="0.16"/>
<circle cx="750.7" cy="757.7" r="2.5" fill="url(#sg)" opacity="0.19"/>
<circle cx="1153.6" cy="62.9" r="2.8" fill="url(#sg)" opacity="0.17"/>
<circle cx="192.6" cy="117.8" r="2.2" fill="url(#sg)" opacity="0.27"/>
<circle cx="234.7" cy="475.4" r="2.6" fill="url(#sg)" opacity="0.19"/>
<circle cx="658.6" cy="75.4" r="1.9" fill="url(#sg)" opacity="0.16"/>
<circle cx="811.9" cy="356.7" r="2.2" fill="url(#sg)" opacity="0.23"/>
<circle cx="549.4" cy="258.1" r="2.8" fill="url(#sg)" opacity="0.25"/>
<circle cx="307.9" cy="469.9" r="2.4" fill="url(#sg)" opacity="0.28"/>
<circle cx="868.5" cy="249.0" r="3.0" fill="url(#sg)" opacity="0.14"/>
<circle cx="508.9" cy="610.8" r="2.0" fill="url(#sg)" opacity="0.21"/>
<circle cx="71.3" cy="542.2" r="2.7" fill="url(#sg)" opacity="0.22"/>
<circle cx="1037.2" cy="268.9" r="2.6" fill="url(#sg)" opacity="0.23"/>
<circle cx="695.8" cy="378.7" r="2.8" fill="url(#sg)" opacity="0.29"/>
<circle cx="573.6" cy="539.1" r="1.9" fill="url(#sg)" opacity="0.25"/>
<circle cx="773.4" cy="792.7" r="2.8" fill="url(#sg)" opacity="0.17"/>
<circle cx="471.6" cy="542.5" r="1.8" fill="url(#sg)" opacity="0.20"/>
<circle cx="220.1" cy="117.3" r="1.9" fill="url(#sg)" opacity="0.26"/>
<circle cx="175.4" cy="217.9" r="2.3" fill="url(#sg)" opacity="0.28"/>
<circle cx="119.1" cy="373.3" r="2.5" fill="url(#sg)" opacity="0.28"/>
<circle cx="347.6" cy="347.2" r="2.2" fill="url(#sg)" opacity="0.28"/>
<circle cx="1132.2" cy="143.4" r="2.0" fill="url(#sg)" opacity="0.16"/>
<circle cx="295.5" cy="400.9" r="2.5" fill="url(#sg)" opacity="0.17"/>
<circle cx="30.7" cy="350.0" r="2.2" fill="url(#sg)" opacity="0.22"/>
<circle cx="621.4" cy="503.2" r="2.6" fill="url(#sg)" opacity="0.13"/>
<circle cx="479.2" cy="334.6" r="1.9" fill="url(#sg)" opacity="0.23"/>
<circle cx="97.9" cy="78.9" r="2.1" fill="url(#sg)" opacity="0.15"/>
<circle cx="418.8" cy="67.5" r="1.8" fill="url(#sg)" opacity="0.15"/>
<circle cx="143.2" cy="307.3" r="1.8" fill="url(#sg)" opacity="0.28"/>
<circle cx="735.2" cy="141.5" r="2.1" fill="url(#sg)" opacity="0.18"/>
<circle cx="446.6" cy="121.7" r="2.8" fill="url(#sg)" opacity="0.30"/>
<circle cx="564.2" cy="400.0" r="1.9" fill="url(#sg)" opacity="0.14"/>
<circle cx="421.7" cy="231.1" r="2.8" fill="url(#sg)" opacity="0.15"/>
<circle cx="52.7" cy="760.2" r="2.4" fill="url(#sg)" opacity="0.15"/>
<circle cx="653.4" cy="47.8" r="2.4" fill="url(#sg)" opacity="0.30"/>
<circle cx="327.6" cy="309.7" r="2.0" fill="url(#sg)" opacity="0.26"/>
<circle cx="641.1" cy="627.7" r="2.2" fill="url(#sg)" opacity="0.16"/>
<circle cx="963.3" cy="786.4" r="2.8" fill="url(#sg)" opacity="0.27"/>
<circle cx="287.9" cy="426.1" r="2.2" fill="url(#sg)" opacity="0.13"/>
<circle cx="58.3" cy="242.4" r="2.1" fill="url(#sg)" opacity="0.24"/>
<circle cx="280.6" cy="201.9" r="2.0" fill="url(#sg)" opacity="0.16"/>
<circle cx="746.8" cy="721.1" r="2.8" fill="url(#sg)" opacity="0.21"/>
<circle cx="780.2" cy="643.5" r="1.9" fill="url(#sg)" opacity="0.24"/>
<circle cx="892.4" cy="395.6" r="2.0" fill="url(#sg)" opacity="0.26"/>
<circle cx="410.1" cy="644.4" r="3.0" fill="url(#sg)" opacity="0.19"/>
<circle cx="489.6" cy="757.0" r="2.7" fill="url(#sg)" opacity="0.15"/>
<circle cx="172.7" cy="143.5" r="2.9" fill="url(#sg)" opacity="0.27"/>
<circle cx="194.8" cy="664.2" r="3.0" fill="url(#sg)" opacity="0.24"/>
<circle cx="430.7" cy="450.0" r="2.0" fill="url(#sg)" opacity="0.12"/>
<circle cx="634.2" cy="746.8" r="2.3" fill="url(#sg)" opacity="0.28"/>
<circle cx="980.2" cy="189.7" r="2.1" fill="url(#sg)" opacity="0.17"/>
<circle cx="303.8" cy="479.1" r="2.1" fill="url(#sg)" opacity="0.20"/>
<circle cx="177.4" cy="728.6" r="2.2" fill="url(#sg)" opacity="0.20"/>
<circle cx="699.8" cy="724.2" r="2.3" fill="url(#sg)" opacity="0.29"/>
<circle cx="605.4" cy="437.0" r="2.4" fill="url(#sg)" opacity="0.12"/>
<circle cx="534.3" cy="168.2" r="1.8" fill="url(#sg)" opacity="0.26"/>
<circle cx="225.1" cy="392.1" r="2.7" fill="url(#sg)" opacity="0.22"/>
<circle cx="402.5" cy="426.6" r="2.5" fill="url(#sg)" opacity="0.26"/>
<circle cx="148.6" cy="459.0" r="2.1" fill="url(#sg)" opacity="0.17"/>
<circle cx="918.0" cy="418.4" r="2.5" fill="url(#sg)" opacity="0.26"/>
<circle cx="733.5" cy="416.8" r="2.4" fill="url(#sg)" opacity="0.24"/>
<circle cx="548.5" cy="438.2" r="2.4" fill="url(#sg)" opacity="0.29"/>
<circle cx="833.6" cy="702.8" r="2.9" fill="url(#sg)" opacity="0.17"/>
<circle cx="672.2" cy="754.3" r="2.8" fill="url(#sg)" opacity="0.14"/>
<circle cx="166.5" cy="367.9" r="1.9" fill="url(#sg)" opacity="0.16"/>
<circle cx="110.5" cy="543.2" r="2.7" fill="url(#sg)" opacity="0.28"/>
<circle cx="204.4" cy="579.1" r="2.6" fill="url(#sg)" opacity="0.15"/>
<circle cx="279.6" cy="761.4" r="2.3" fill="url(#sg)" opacity="0.21"/>
<circle cx="212.5" cy="359.7" r="2.4" fill="url(#sg)" opacity="0.18"/>
<circle cx="252.1" cy="272.6" r="2.7" fill="url(#sg)" opacity="0.12"/>
<circle cx="665.9" cy="366.6" r="1.8" fill="url(#sg)" opacity="0.18"/>
<circle cx="746.6" cy="422.0" r="1.9" fill="url(#sg)" opacity="0.30"/>
<circle cx="936.6" cy="776.2" r="1.9" fill="url(#sg)" opacity="0.17"/>
<circle cx="71.7" cy="627.6" r="2.1" fill="url(#sg)" opacity="0.14"/>
<circle cx="513.7" cy="729.7" r="2.8" fill="url(#sg)" opacity="0.17"/>
<circle cx="198.5" cy="735.7" r="2.5" fill="url(#sg)" opacity="0.25"/>
<circle cx="129.3" cy="71.4" r="2.6" fill="url(#sg)" opacity="0.20"/>
<circle cx="109.6" cy="750.5" r="2.6" fill="url(#sg)" opacity="0.26"/>
<circle cx="122.7" cy="687.2" r="1.9" fill="url(#sg)" opacity="0.28"/>
<circle cx="550.1" cy="288.5" r="2.5" fill="url(#sg)" opacity="0.29"/>
<circle cx="335.4" cy="126.6" r="2.4" fill="url(#sg)" opacity="0.16"/>
<circle cx="152.4" cy="151.5" r="1.9" fill="url(#sg)" opacity="0.16"/>
<circle cx="386.4" cy="262.2" r="2.7" fill="url(#sg)" opacity="0.17"/>
<circle cx="603.6" cy="164.2" r="2.2" fill="url(#sg)" opacity="0.12"/>
<circle cx="315.3" cy="38.8" r="2.7" fill="url(#sg)" opacity="0.22"/>
<circle cx="244.8" cy="393.0" r="2.9" fill="url(#sg)" opacity="0.14"/>
<circle cx="597.7" cy="670.5" r="2.3" fill="url(#sg)" opacity="0.21"/>
<circle cx="820.3" cy="784.5" r="2.2" fill="url(#sg)" opacity="0.27"/>
<circle cx="842.3" cy="517.3" r="2.3" fill="url(#sg)" opacity="0.18"/>
<circle cx="88.8" cy="127.1" r="1.9" fill="url(#sg)" opacity="0.25"/>
<circle cx="321.2" cy="152.9" r="1.9" fill="url(#sg)" opacity="0.27"/>
<circle cx="351.6" cy="213.7" r="2.2" fill="url(#sg)" opacity="0.20"/>
<circle cx="208.0" cy="370.7" r="2.1" fill="url(#sg)" opacity="0.29"/>
<circle cx="308.3" cy="771.5" r="2.2" fill="url(#sg)" opacity="0.18"/>
<circle cx="27.2" cy="321.2" r="2.4" fill="url(#sg)" opacity="0.21"/>
<circle cx="258.1" cy="416.2" r="1.8" fill="url(#sg)" opacity="0.17"/>
<circle cx="129.7" cy="335.0" r="1.9" fill="url(#sg)" opacity="0.12"/>
<circle cx="377.4" cy="206.5" r="2.5" fill="url(#sg)" opacity="0.22"/>
<circle cx="892.9" cy="534.0" r="2.7" fill="url(#sg)" opacity="0.28"/>
<circle cx="475.9" cy="278.4" r="3.0" fill="url(#sg)" opacity="0.15"/>
<circle cx="862.4" cy="522.9" r="1.9" fill="url(#sg)" opacity="0.27"/>
<circle cx="873.6" cy="653.2" r="2.0" fill="url(#sg)" opacity="0.21"/>
<circle cx="608.5" cy="670.7" r="2.8" fill="url(#sg)" opacity="0.27"/>
<circle cx="700.6" cy="715.4" r="2.6" fill="url(#sg)" opacity="0.24"/>
<circle cx="291.6" cy="51.0" r="2.0" fill="url(#sg)" opacity="0.18"/>
<circle cx="147.2" cy="671.4" r="2.5" fill="url(#sg)" opacity="0.23"/>
<circle cx="749.3" cy="551.8" r="2.4" fill="url(#sg)" opacity="0.12"/>
<circle cx="947.3" cy="603.9" r="2.4" fill="url(#sg)" opacity="0.22"/>
<circle cx="787.5" cy="77.9" r="2.7" fill="url(#sg)" opacity="0.17"/>
<circle cx="112.0" cy="231.7" r="2.7" fill="url(#sg)" opacity="0.16"/>
<circle cx="880.5" cy="779.3" r="2.4" fill="url(#sg)" opacity="0.19"/>
<circle cx="579.3" cy="554.1" r="2.7" fill="url(#sg)" opacity="0.23"/>
<circle cx="768.4" cy="86.7" r="2.0" fill="url(#sg)" opacity="0.17"/>
<circle cx="884.4" cy="261.7" r="2.5" fill="url(#sg)" opacity="0.12"/>
<circle cx="96.1" cy="234.2" r="2.6" fill="url(#sg)" opacity="0.24"/>
<circle cx="806.4" cy="251.3" r="2.4" fill="url(#sg)" opacity="0.20"/>
<circle cx="564.6" cy="118.4" r="2.9" fill="url(#sg)" opacity="0.16"/>
<circle cx="46.2" cy="380.9" r="2.8" fill="url(#sg)" opacity="0.29"/>
<circle cx="545.1" cy="234.1" r="2.1" fill="url(#sg)" opacity="0.29"/>
<circle cx="269.4" cy="475.3" r="2.0" fill="url(#sg)" opacity="0.21"/>
<circle cx="1126.4" cy="129.2" r="2.8" fill="url(#sg)" opacity="0.21"/>
<circle cx="293.2" cy="719.1" r="2.4" fill="url(#sg)" opacity="0.12"/>
<circle cx="30.1" cy="406.1" r="2.3" fill="url(#sg)" opacity="0.17"/>
<circle cx="188.5" cy="292.2" r="2.2" fill="url(#sg)" opacity="0.27"/>
<circle cx="28.0" cy="605.8" r="2.8" fill="url(#sg)" opacity="0.14"/>
<circle cx="1067.3" cy="250.5" r="2.2" fill="url(#sg)" opacity="0.19"/>
<circle cx="442.6" cy="357.0" r="2.1" fill="url(#sg)" opacity="0.13"/>
<circle cx="143.5" cy="670.5" r="2.1" fill="url(#sg)" opacity="0.29"/>
<circle cx="314.0" cy="231.9" r="2.4" fill="url(#sg)" opacity="0.15"/>
<circle cx="457.2" cy="764.2" r="2.9" fill="url(#sg)" opacity="0.27"/>
<circle cx="754.7" cy="731.2" r="2.9" fill="url(#sg)" opacity="0.22"/>
<circle cx="857.1" cy="65.1" r="2.7" fill="url(#sg)" opacity="0.20"/>
<circle cx="895.3" cy="523.9" r="2.1" fill="url(#sg)" opacity="0.13"/>
<circle cx="1096.4" cy="125.2" r="2.4" fill="url(#sg)" opacity="0.18"/>
<circle cx="369.9" cy="596.8" r="3.0" fill="url(#sg)" opacity="0.17"/>
<circle cx="783.7" cy="258.9" r="2.5" fill="url(#sg)" opacity="0.19"/>
<circle cx="219.3" cy="151.6" r="2.0" fill="url(#sg)" opacity="0.28"/>
<circle cx="600.1" cy="196.6" r="2.9" fill="url(#sg)" opacity="0.30"/>
<circle cx="545.7" cy="134.6" r="2.0" fill="url(#sg)" opacity="0.14"/>
<circle cx="421.0" cy="97.2" r="2.1" fill="url(#sg)" opacity="0.17"/>
<circle cx="683.9" cy="711.1" r="2.7" fill="url(#sg)" opacity="0.19"/>
<circle cx="504.0" cy="431.1" r="2.3" fill="url(#sg)" opacity="0.18"/>
<circle cx="97.7" cy="241.0" r="3.0" fill="url(#sg)" opacity="0.14"/>
<circle cx="607.4" cy="512.4" r="2.8" fill="url(#sg)" opacity="0.16"/>
<circle cx="339.0" cy="218.6" r="2.3" fill="url(#sg)" opacity="0.20"/>
<circle cx="1034.2" cy="43.8" r="1.8" fill="url(#sg)" opacity="0.25"/>
<circle cx="704.2" cy="27.1" r="2.3" fill="url(#sg)" opacity="0.29"/>
<circle cx="1148.9" cy="218.6" r="1.9" fill="url(#sg)" opacity="0.15"/>
<circle cx="629.3" cy="552.9" r="2.9" fill="url(#sg)" opacity="0.25"/>
<circle cx="773.7" cy="616.7" r="2.3" fill="url(#sg)" opacity="0.22"/>
<circle cx="71.7" cy="630.2" r="2.1" fill="url(#sg)" opacity="0.29"/>
<circle cx="771.6" cy="261.2" r="2.0" fill="url(#sg)" opacity="0.17"/>
<circle cx="760.9" cy="565.6" r="1.9" fill="url(#sg)" opacity="0.13"/>
<circle cx="631.7" cy="476.4" r="2.3" fill="url(#sg)" opacity="0.16"/>
<circle cx="720.2" cy="35.1" r="2.2" fill="url(#sg)" opacity="0.20"/>
<circle cx="297.2" cy="217.5" r="3.0" fill="url(#sg)" opacity="0.25"/>
<circle cx="381.0" cy="43.8" r="2.4" fill="url(#sg)" opacity="0.24"/>
<circle cx="511.1" cy="225.3" r="2.6" fill="url(#sg)" opacity="0.29"/>
<circle cx="287.9" cy="53.3" r="2.2" fill="url(#sg)" opacity="0.20"/>
<circle cx="814.4" cy="179.7" r="2.8" fill="url(#sg)" opacity="0.25"/>
<circle cx="609.1" cy="185.2" r="3.0" fill="url(#sg)" opacity="0.18"/>
<circle cx="973.1" cy="205.0" r="2.1" fill="url(#sg)" opacity="0.26"/>
<circle cx="366.6" cy="760.9" r="2.4" fill="url(#sg)" opacity="0.15"/>
<circle cx="283.9" cy="348.5" r="2.6" fill="url(#sg)" opacity="0.29"/>
<circle cx="195.1" cy="330.4" r="2.1" fill="url(#sg)" opacity="0.30"/>
<circle cx="189.9" cy="67.0" r="1.9" fill="url(#sg)" opacity="0.19"/>
<circle cx="872.3" cy="796.1" r="2.9" fill="url(#sg)" opacity="0.18"/>
<circle cx="240.3" cy="748.6" r="2.7" fill="url(#sg)" opacity="0.13"/>
<circle cx="793.4" cy="318.9" r="2.2" fill="url(#sg)" opacity="0.18"/>
<circle cx="221.5" cy="29.2" r="2.1" fill="url(#sg)" opacity="0.18"/>
<circle cx="1129.6" cy="122.4" r="3.0" fill="url(#sg)" opacity="0.16"/>
<circle cx="437.9" cy="660.4" r="2.8" fill="url(#sg)" opacity="0.20"/>
<circle cx="82.9" cy="392.0" r="2.2" fill="url(#sg)" opacity="0.29"/>
<circle cx="248.9" cy="307.8" r="2.9" fill="url(#sg)" opacity="0.13"/>
<circle cx="500.5" cy="652.9" r="2.7" fill="url(#sg)" opacity="0.13"/>
<circle cx="66.3" cy="75.2" r="2.9" fill="url(#sg)" opacity="0.17"/>
<circle cx="889.1" cy="719.8" r="2.2" fill="url(#sg)" opacity="0.17"/>
<circle cx="328.8" cy="579.5" r="2.2" fill="url(#sg)" opacity="0.17"/>
<circle cx="30.4" cy="609.6" r="2.9" fill="url(#sg)" opacity="0.23"/>
<circle cx="1115.5" cy="45.7" r="2.1" fill="url(#sg)" opacity="0.21"/>
<circle cx="472.4" cy="220.6" r="2.3" fill="url(#sg)" opacity="0.21"/>
<circle cx="1098.0" cy="168.0" r="2.8" fill="url(#sg)" opacity="0.25"/>
<circle cx="727.4" cy="279.7" r="2.2" fill="url(#sg)" opacity="0.19"/>
<circle cx="929.5" cy="87.9" r="2.0" fill="url(#sg)" opacity="0.26"/>
<circle cx="311.6" cy="76.9" r="1.8" fill="url(#sg)" opacity="0.22"/>
<circle cx="402.3" cy="782.8" r="2.9" fill="url(#sg)" opacity="0.30"/>
<circle cx="331.9" cy="91.8" r="1.9" fill="url(#sg)" opacity="0.21"/>
<circle cx="845.8" cy="371.6" r="2.1" fill="url(#sg)" opacity="0.20"/>
<circle cx="742.5" cy="546.7" r="2.7" fill="url(#sg)" opacity="0.27"/>
<circle cx="793.4" cy="120.4" r="2.8" fill="url(#sg)" opacity="0.17"/>
<circle cx="680.8" cy="314.6" r="2.7" fill="url(#sg)" opacity="0.16"/>
<circle cx="311.8" cy="216.2" r="2.0" fill="url(#sg)" opacity="0.28"/>
<circle cx="693.9" cy="278.6" r="2.3" fill="url(#sg)" opacity="0.30"/>
<circle cx="612.0" cy="205.4" r="2.8" fill="url(#sg)" opacity="0.24"/>
<circle cx="1170.6" cy="105.9" r="2.4" fill="url(#sg)" opacity="0.27"/>
<circle cx="72.6" cy="253.4" r="1.9" fill="url(#sg)" opacity="0.15"/>
<circle cx="326.2" cy="626.7" r="2.9" fill="url(#sg)" opacity="0.14"/>
<circle cx="714.5" cy="505.0" r="2.1" fill="url(#sg)" opacity="0.19"/>
<circle cx="189.3" cy="184.3" r="2.1" fill="url(#sg)" opacity="0.23"/>
<circle cx="778.6" cy="183.9" r="1.8" fill="url(#sg)" opacity="0.18"/>
<circle cx="809.5" cy="169.7" r="2.2" fill="url(#sg)" opacity="0.16"/>
<circle cx="944.5" cy="449.5" r="1.9" fill="url(#sg)" opacity="0.14"/>
<circle cx="482.6" cy="451.2" r="2.6" fill="url(#sg)" opacity="0.14"/>
<circle cx="215.1" cy="563.2" r="2.3" fill="url(#sg)" opacity="0.17"/>
<circle cx="381.3" cy="761.9" r="2.2" fill="url(#sg)" opacity="0.22"/>
<circle cx="438.5" cy="348.1" r="2.8" fill="url(#sg)" opacity="0.30"/>
<circle cx="446.2" cy="179.0" r="2.7" fill="url(#sg)" opacity="0.16"/>
<circle cx="32.8" cy="722.2" r="2.3" fill="url(#sg)" opacity="0.27"/>
<circle cx="495.2" cy="707.7" r="2.4" fill="url(#sg)" opacity="0.15"/>
<circle cx="43.1" cy="452.2" r="2.6" fill="url(#sg)" opacity="0.28"/>
<circle cx="128.8" cy="506.7" r="2.2" fill="url(#sg)" opacity="0.21"/>
<circle cx="194.5" cy="245.4" r="2.4" fill="url(#sg)" opacity="0.29"/>
<circle cx="151.7" cy="405.2" r="2.8" fill="url(#sg)" opacity="0.29"/>
<circle cx="253.9" cy="124.6" r="2.9" fill="url(#sg)" opacity="0.30"/>
<circle cx="583.6" cy="68.2" r="2.9" fill="url(#sg)" opacity="0.19"/>
<circle cx="978.4" cy="150.6" r="2.7" fill="url(#sg)" opacity="0.16"/>
<circle cx="493.2" cy="679.5" r="2.8" fill="url(#sg)" opacity="0.15"/>
<circle cx="277.9" cy="335.2" r="2.4" fill="url(#sg)" opacity="0.19"/>
<circle cx="168.1" cy="217.5" r="2.7" fill="url(#sg)" opacity="0.28"/>
<circle cx="73.5" cy="460.6" r="2.7" fill="url(#sg)" opacity="0.13"/>
<circle cx="994.1" cy="117.8" r="2.5" fill="url(#sg)" opacity="0.22"/>
<circle cx="750.2" cy="263.1" r="2.3" fill="url(#sg)" opacity="0.22"/>
<circle cx="517.7" cy="535.0" r="2.3" fill="url(#sg)" opacity="0.20"/>
<circle cx="53.0" cy="504.2" r="2.4" fill="url(#sg)" opacity="0.16"/>
<circle cx="907.9" cy="628.4" r="2.3" fill="url(#sg)" opacity="0.15"/>
<circle cx="572.6" cy="109.6" r="2.0" fill="url(#sg)" opacity="0.20"/>
<circle cx="131.9" cy="367.8" r="2.4" fill="url(#sg)" opacity="0.13"/>
<circle cx="761.1" cy="90.4" r="2.7" fill="url(#sg)" opacity="0.26"/>
<circle cx="616.8" cy="68.8" r="2.4" fill="url(#sg)" opacity="0.19"/>
<circle cx="1124.3" cy="132.0" r="2.8" fill="url(#sg)" opacity="0.30"/>
<circle cx="871.6" cy="655.4" r="2.0" fill="url(#sg)" opacity="0.30"/>
<circle cx="594.1" cy="764.6" r="2.9" fill="url(#sg)" opacity="0.15"/>
<circle cx="936.6" cy="744.5" r="1.9" fill="url(#sg)" opacity="0.18"/>
<circle cx="899.4" cy="149.4" r="2.9" fill="url(#sg)" opacity="0.17"/>
<circle cx="968.0" cy="137.7" r="2.4" fill="url(#sg)" opacity="0.29"/>
<circle cx="266.6" cy="229.7" r="2.4" fill="url(#sg)" opacity="0.18"/>
<circle cx="68.5" cy="167.4" r="2.0" fill="url(#sg)" opacity="0.29"/>
<circle cx="811.0" cy="717.4" r="2.0" fill="url(#sg)" opacity="0.26"/>
<circle cx="158.9" cy="436.2" r="2.6" fill="url(#sg)" opacity="0.18"/>
<circle cx="696.0" cy="707.4" r="1.9" fill="url(#sg)" opacity="0.30"/>
<circle cx="753.4" cy="331.0" r="2.8" fill="url(#sg)" opacity="0.17"/>
<circle cx="442.1" cy="616.5" r="2.3" fill="url(#sg)" opacity="0.15"/>
<circle cx="884.9" cy="64.2" r="2.8" fill="url(#sg)" opacity="0.17"/>
<circle cx="764.3" cy="785.7" r="2.5" fill="url(#sg)" opacity="0.24"/>
<circle cx="387.1" cy="28.4" r="1.8" fill="url(#sg)" opacity="0.15"/>
<circle cx="737.5" cy="360.3" r="2.4" fill="url(#sg)" opacity="0.28"/>
<circle cx="178.5" cy="202.2" r="2.6" fill="url(#sg)" opacity="0.12"/>
<circle cx="29.0" cy="300.7" r="1.9" fill="url(#sg)" opacity="0.18"/>
<circle cx="285.0" cy="476.9" r="2.5" fill="url(#sg)" opacity="0.16"/>
<circle cx="746.6" cy="393.1" r="2.0" fill="url(#sg)" opacity="0.29"/>
<circle cx="307.3" cy="142.1" r="1.9" fill="url(#sg)" opacity="0.23"/>
<circle cx="490.3" cy="230.7" r="1.8" fill="url(#sg)" opacity="0.24"/>
<circle cx="675.5" cy="297.1" r="2.6" fill="url(#sg)" opacity="0.20"/>
<circle cx="313.0" cy="723.6" r="1.9" fill="url(#sg)" opacity="0.22"/>
<circle cx="494.9" cy="210.2" r="1.9" fill="url(#sg)" opacity="0.26"/>
<circle cx="40.3" cy="451.8" r="2.9" fill="url(#sg)" opacity="0.15"/>
<circle cx="256.4" cy="495.8" r="2.4" fill="url(#sg)" opacity="0.24"/>
<circle cx="965.5" cy="161.6" r="2.2" fill="url(#sg)" opacity="0.17"/>
<circle cx="82.0" cy="712.7" r="2.7" fill="url(#sg)" opacity="0.25"/>
<circle cx="33.3" cy="678.1" r="2.7" fill="url(#sg)" opacity="0.20"/>
<circle cx="882.7" cy="375.9" r="2.1" fill="url(#sg)" opacity="0.14"/>
<circle cx="294.3" cy="56.9" r="2.2" fill="url(#sg)" opacity="0.25"/>
<circle cx="828.9" cy="678.8" r="2.7" fill="url(#sg)" opacity="0.17"/>
<circle cx="665.6" cy="363.2" r="2.7" fill="url(#sg)" opacity="0.21"/>
<circle cx="332.4" cy="522.0" r="3.0" fill="url(#sg)" opacity="0.16"/>
<circle cx="1042.5" cy="38.7" r="2.1" fill="url(#sg)" opacity="0.16"/>
<circle cx="885.2" cy="755.4" r="2.7" fill="url(#sg)" opacity="0.18"/>
<circle cx="1042.6" cy="280.3" r="2.1" fill="url(#sg)" opacity="0.28"/>
<circle cx="754.5" cy="561.2" r="2.6" fill="url(#sg)" opacity="0.30"/>
<circle cx="568.3" cy="674.4" r="2.6" fill="url(#sg)" opacity="0.27"/>
<circle cx="531.0" cy="585.7" r="2.5" fill="url(#sg)" opacity="0.18"/>
<circle cx="270.8" cy="507.0" r="1.9" fill="url(#sg)" opacity="0.28"/>
<circle cx="193.0" cy="47.7" r="1.9" fill="url(#sg)" opacity="0.29"/>
<circle cx="424.3" cy="136.4" r="1.8" fill="url(#sg)" opacity="0.13"/>
<circle cx="826.0" cy="515.7" r="2.6" fill="url(#sg)" opacity="0.25"/>
<circle cx="102.0" cy="482.3" r="2.2" fill="url(#sg)" opacity="0.27"/>
<circle cx="102.2" cy="696.1" r="2.9" fill="url(#sg)" opacity="0.29"/>
<circle cx="149.7" cy="185.6" r="1.9" fill="url(#sg)" opacity="0.13"/>
<circle cx="758.5" cy="663.1" r="2.6" fill="url(#sg)" opacity="0.17"/>
<circle cx="141.4" cy="102.5" r="2.7" fill="url(#sg)" opacity="0.16"/>
<circle cx="394.6" cy="353.7" r="1.8" fill="url(#sg)" opacity="0.17"/>
<circle cx="352.4" cy="578.9" r="2.2" fill="url(#sg)" opacity="0.18"/>
<circle cx="61.8" cy="345.4" r="2.3" fill="url(#sg)" opacity="0.26"/>
<circle cx="426.5" cy="570.3" r="2.4" fill="url(#sg)" opacity="0.16"/>
<circle cx="1021.9" cy="97.1" r="2.8" fill="url(#sg)" opacity="0.15"/>
<circle cx="27.5" cy="182.8" r="2.7" fill="url(#sg)" opacity="0.30"/>
<circle cx="31.0" cy="405.4" r="2.4" fill="url(#sg)" opacity="0.26"/>
<circle cx="239.1" cy="408.3" r="2.2" fill="url(#sg)" opacity="0.27"/>
<circle cx="327.0" cy="754.7" r="2.1" fill="url(#sg)" opacity="0.16"/>
<circle cx="833.9" cy="411.2" r="1.9" fill="url(#sg)" opacity="0.23"/>
<circle cx="119.4" cy="634.5" r="2.6" fill="url(#sg)" opacity="0.26"/>
<circle cx="751.3" cy="301.2" r="2.3" fill="url(#sg)" opacity="0.19"/>
<circle cx="1054.4" cy="93.4" r="2.9" fill="url(#sg)" opacity="0.12"/>
<circle cx="264.1" cy="229.9" r="2.9" fill="url(#sg)" opacity="0.21"/>
<circle cx="464.1" cy="708.5" r="2.1" fill="url(#sg)" opacity="0.20"/>
<circle cx="639.9" cy="608.7" r="2.7" fill="url(#sg)" opacity="0.24"/>
<circle cx="428.5" cy="278.9" r="2.0" fill="url(#sg)" opacity="0.27"/>
<circle cx="790.7" cy="599.1" r="2.0" fill="url(#sg)" opacity="0.20"/>
<circle cx="919.3" cy="473.5" r="2.0" fill="url(#sg)" opacity="0.20"/>
<circle cx="1048.3" cy="210.5" r="2.0" fill="url(#sg)" opacity="0.17"/>
<circle cx="838.2" cy="677.5" r="2.0" fill="url(#sg)" opacity="0.15"/>
<circle cx="312.0" cy="278.8" r="2.4" fill="url(#sg)" opacity="0.15"/>
<circle cx="404.9" cy="172.9" r="3.0" fill="url(#sg)" opacity="0.25"/>
<circle cx="143.6" cy="769.0" r="1.9" fill="url(#sg)" opacity="0.19"/>
<circle cx="873.0" cy="362.3" r="2.0" fill="url(#sg)" opacity="0.23"/>
<circle cx="149.4" cy="186.2" r="2.3" fill="url(#sg)" opacity="0.13"/>
<circle cx="486.9" cy="636.9" r="2.6" fill="url(#sg)" opacity="0.21"/>
<circle cx="756.4" cy="384.2" r="2.0" fill="url(#sg)" opacity="0.23"/>
<circle cx="493.4" cy="598.3" r="2.9" fill="url(#sg)" opacity="0.20"/>
<circle cx="688.9" cy="604.6" r="2.3" fill="url(#sg)" opacity="0.16"/>
<circle cx="860.2" cy="705.5" r="2.7" fill="url(#sg)" opacity="0.25"/>
<circle cx="767.0" cy="377.0" r="2.2" fill="url(#sg)" opacity="0.23"/>
<circle cx="139.0" cy="350.5" r="2.7" fill="url(#sg)" opacity="0.25"/>
<circle cx="753.2" cy="219.8" r="2.3" fill="url(#sg)" opacity="0.20"/>
<circle cx="743.9" cy="342.6" r="2.6" fill="url(#sg)" opacity="0.29"/>
<circle cx="237.4" cy="531.6" r="2.7" fill="url(#sg)" opacity="0.19"/>
<circle cx="591.8" cy="778.4" r="1.8" fill="url(#sg)" opacity="0.22"/>
<circle cx="211.8" cy="629.8" r="2.9" fill="url(#sg)" opacity="0.21"/>
<circle cx="142.8" cy="470.0" r="2.4" fill="url(#sg)" opacity="0.25"/>
<circle cx="617.6" cy="519.9" r="2.8" fill="url(#sg)" opacity="0.21"/>
<circle cx="500.0" cy="757.9" r="2.1" fill="url(#sg)" opacity="0.24"/>
<circle cx="479.3" cy="615.0" r="1.9" fill="url(#sg)" opacity="0.30"/>
<circle cx="436.6" cy="70.7" r="2.1" fill="url(#sg)" opacity="0.19"/>
<circle cx="41.4" cy="349.7" r="2.3" fill="url(#sg)" opacity="0.25"/>
<circle cx="432.7" cy="231.4" r="2.1" fill="url(#sg)" opacity="0.25"/>
<circle cx="278.8" cy="644.9" r="2.3" fill="url(#sg)" opacity="0.16"/>
<circle cx="175.3" cy="625.8" r="2.8" fill="url(#sg)" opacity="0.23"/>
<circle cx="567.9" cy="460.3" r="2.1" fill="url(#sg)" opacity="0.29"/>
<circle cx="433.9" cy="519.5" r="2.8" fill="url(#sg)" opacity="0.27"/>
<circle cx="566.7" cy="253.9" r="2.5" fill="url(#sg)" opacity="0.14"/>
<circle cx="1008.5" cy="233.2" r="2.3" fill="url(#sg)" opacity="0.17"/>
<circle cx="518.2" cy="170.3" r="1.8" fill="url(#sg)" opacity="0.25"/>
<circle cx="350.8" cy="215.9" r="2.2" fill="url(#sg)" opacity="0.21"/>
<circle cx="520.9" cy="518.4" r="2.6" fill="url(#sg)" opacity="0.19"/>
<circle cx="91.9" cy="665.3" r="2.9" fill="url(#sg)" opacity="0.26"/>
<circle cx="188.2" cy="668.0" r="2.6" fill="url(#sg)" opacity="0.12"/>
<circle cx="39.3" cy="760.8" r="2.6" fill="url(#sg)" opacity="0.17"/>
<circle cx="143.2" cy="137.0" r="2.1" fill="url(#sg)" opacity="0.26"/>
<circle cx="426.1" cy="144.7" r="2.9" fill="url(#sg)" opacity="0.26"/>
<circle cx="219.9" cy="714.1" r="2.5" fill="url(#sg)" opacity="0.26"/>
<circle cx="798.1" cy="716.2" r="2.7" fill="url(#sg)" opacity="0.27"/>
<circle cx="254.0" cy="561.1" r="2.4" fill="url(#sg)" opacity="0.25"/>
<circle cx="532.6" cy="707.5" r="2.5" fill="url(#sg)" opacity="0.17"/>
<circle cx="296.5" cy="134.4" r="2.4" fill="url(#sg)" opacity="0.13"/>
<circle cx="565.5" cy="138.3" r="2.4" fill="url(#sg)" opacity="0.21"/>
<circle cx="649.2" cy="692.3" r="1.8" fill="url(#sg)" opacity="0.27"/>
<circle cx="566.5" cy="460.7" r="2.6" fill="url(#sg)" opacity="0.27"/>
<circle cx="459.1" cy="349.9" r="3.0" fill="url(#sg)" opacity="0.13"/>
<circle cx="761.8" cy="517.5" r="1.8" fill="url(#sg)" opacity="0.23"/>
<circle cx="814.4" cy="745.2" r="2.2" fill="url(#sg)" opacity="0.30"/>
<circle cx="615.8" cy="400.7" r="2.9" fill="url(#sg)" opacity="0.13"/>
<circle cx="855.5" cy="509.1" r="2.2" fill="url(#sg)" opacity="0.28"/>
<circle cx="448.9" cy="392.9" r="2.4" fill="url(#sg)" opacity="0.26"/>
<circle cx="269.4" cy="362.5" r="2.3" fill="url(#sg)" opacity="0.22"/>
<circle cx="980.9" cy="252.8" r="2.8" fill="url(#sg)" opacity="0.19"/>
<circle cx="607.8" cy="236.5" r="2.4" fill="url(#sg)" opacity="0.30"/>
<circle cx="782.0" cy="637.6" r="2.2" fill="url(#sg)" opacity="0.18"/>
<circle cx="371.6" cy="479.2" r="2.6" fill="url(#sg)" opacity="0.26"/>
<circle cx="72.3" cy="584.2" r="2.9" fill="url(#sg)" opacity="0.22"/>
<circle cx="83.4" cy="258.6" r="1.8" fill="url(#sg)" opacity="0.15"/>
<circle cx="786.0" cy="635.3" r="2.9" fill="url(#sg)" opacity="0.23"/>
<circle cx="738.3" cy="510.3" r="2.6" fill="url(#sg)" opacity="0.23"/>
<circle cx="812.5" cy="190.8" r="2.6" fill="url(#sg)" opacity="0.20"/>
<circle cx="906.9" cy="105.1" r="2.0" fill="url(#sg)" opacity="0.13"/>
<circle cx="920.6" cy="731.8" r="2.6" fill="url(#sg)" opacity="0.19"/>
<circle cx="675.2" cy="225.9" r="2.2" fill="url(#sg)" opacity="0.20"/>
<circle cx="393.8" cy="359.1" r="2.6" fill="url(#sg)" opacity="0.29"/>
<circle cx="89.1" cy="464.5" r="1.8" fill="url(#sg)" opacity="0.14"/>
<circle cx="961.9" cy="470.6" r="2.9" fill="url(#sg)" opacity="0.20"/>
<circle cx="42.3" cy="325.5" r="2.5" fill="url(#sg)" opacity="0.29"/>
<circle cx="502.3" cy="105.7" r="2.6" fill="url(#sg)" opacity="0.16"/>
<circle cx="201.3" cy="39.0" r="1.8" fill="url(#sg)" opacity="0.24"/>
<circle cx="166.5" cy="772.1" r="1.9" fill="url(#sg)" opacity="0.28"/>
<circle cx="175.0" cy="40.7" r="2.7" fill="url(#sg)" opacity="0.16"/>
<circle cx="873.3" cy="171.5" r="1.9" fill="url(#sg)" opacity="0.26"/>
<circle cx="850.2" cy="686.6" r="2.7" fill="url(#sg)" opacity="0.14"/>
<circle cx="752.1" cy="573.8" r="2.4" fill="url(#sg)" opacity="0.29"/>
<circle cx="319.4" cy="770.5" r="2.7" fill="url(#sg)" opacity="0.12"/>
<circle cx="43.0" cy="528.7" r="2.8" fill="url(#sg)" opacity="0.13"/>
<circle cx="385.3" cy="589.4" r="2.0" fill="url(#sg)" opacity="0.27"/>
<circle cx="587.7" cy="73.1" r="2.2" fill="url(#sg)" opacity="0.22"/>
<circle cx="532.7" cy="548.9" r="2.0" fill="url(#sg)" opacity="0.26"/>
<circle cx="445.6" cy="524.2" r="2.6" fill="url(#sg)" opacity="0.20"/>
<circle cx="471.5" cy="633.2" r="2.9" fill="url(#sg)" opacity="0.26"/>
<circle cx="680.7" cy="252.4" r="1.9" fill="url(#sg)" opacity="0.30"/>
<circle cx="838.3" cy="664.9" r="2.2" fill="url(#sg)" opacity="0.23"/>
<circle cx="720.3" cy="264.9" r="2.3" fill="url(#sg)" opacity="0.28"/>
<circle cx="461.1" cy="555.0" r="2.5" fill="url(#sg)" opacity="0.28"/>
<circle cx="958.6" cy="245.4" r="1.8" fill="url(#sg)" opacity="0.17"/>
<circle cx="514.0" cy="479.3" r="2.8" fill="url(#sg)" opacity="0.28"/>
<circle cx="74.9" cy="669.4" r="2.8" fill="url(#sg)" opacity="0.28"/>
<circle cx="686.6" cy="238.1" r="2.8" fill="url(#sg)" opacity="0.27"/>
<circle cx="816.8" cy="731.5" r="2.2" fill="url(#sg)" opacity="0.14"/>
<circle cx="665.5" cy="641.8" r="2.0" fill="url(#sg)" opacity="0.26"/>
<circle cx="1102.1" cy="207.4" r="2.5" fill="url(#sg)" opacity="0.24"/>
<circle cx="563.4" cy="186.3" r="2.1" fill="url(#sg)" opacity="0.26"/>
<circle cx="940.4" cy="381.4" r="1.9" fill="url(#sg)" opacity="0.27"/>
<circle cx="917.9" cy="206.5" r="2.5" fill="url(#sg)" opacity="0.28"/>
<circle cx="576.5" cy="481.4" r="2.0" fill="url(#sg)" opacity="0.15"/>
<circle cx="234.7" cy="567.5" r="2.2" fill="url(#sg)" opacity="0.22"/>
<circle cx="490.9" cy="425.8" r="2.0" fill="url(#sg)" opacity="0.13"/>
<circle cx="148.6" cy="514.8" r="2.7" fill="url(#sg)" opacity="0.15"/>
<circle cx="715.8" cy="292.9" r="2.4" fill="url(#sg)" opacity="0.12"/>
<circle cx="64.8" cy="790.6" r="2.8" fill="url(#sg)" opacity="0.21"/>
<circle cx="681.1" cy="228.7" r="2.7" fill="url(#sg)" opacity="0.20"/>
<circle cx="319.4" cy="56.2" r="2.0" fill="url(#sg)" opacity="0.15"/>
<circle cx="122.6" cy="66.3" r="2.5" fill="url(#sg)" opacity="0.28"/>
<circle cx="555.3" cy="757.3" r="2.9" fill="url(#sg)" opacity="0.13"/>
<circle cx="716.8" cy="333.4" r="1.9" fill="url(#sg)" opacity="0.29"/>
<circle cx="323.1" cy="462.2" r="2.6" fill="url(#sg)" opacity="0.29"/>
<circle cx="799.5" cy="330.1" r="2.3" fill="url(#sg)" opacity="0.15"/>
<circle cx="282.1" cy="56.8" r="2.1" fill="url(#sg)" opacity="0.18"/>
<circle cx="993.0" cy="63.3" r="2.7" fill="url(#sg)" opacity="0.25"/>
<circle cx="772.9" cy="786.8" r="1.9" fill="url(#sg)" opacity="0.15"/>
<circle cx="898.0" cy="751.3" r="2.6" fill="url(#sg)" opacity="0.17"/>
<circle cx="709.1" cy="611.3" r="1.9" fill="url(#sg)" opacity="0.18"/>
<circle cx="322.8" cy="122.7" r="2.4" fill="url(#sg)" opacity="0.15"/>
<circle cx="301.4" cy="137.4" r="2.6" fill="url(#sg)" opacity="0.12"/>
<circle cx="854.4" cy="177.4" r="1.8" fill="url(#sg)" opacity="0.29"/>
<circle cx="280.7" cy="747.1" r="2.8" fill="url(#sg)" opacity="0.28"/>
<circle cx="187.4" cy="371.8" r="1.9" fill="url(#sg)" opacity="0.29"/>
<circle cx="548.4" cy="289.0" r="2.8" fill="url(#sg)" opacity="0.21"/>
<circle cx="751.6" cy="137.1" r="2.1" fill="url(#sg)" opacity="0.13"/>
<circle cx="850.4" cy="453.7" r="2.0" fill="url(#sg)" opacity="0.28"/>
<circle cx="333.7" cy="344.5" r="2.0" fill="url(#sg)" opacity="0.17"/>
<circle cx="995.7" cy="284.9" r="2.0" fill="url(#sg)" opacity="0.21"/>
<circle cx="393.4" cy="723.3" r="1.9" fill="url(#sg)" opacity="0.30"/>
<circle cx="91.7" cy="717.1" r="2.6" fill="url(#sg)" opacity="0.16"/>
<circle cx="577.5" cy="247.7" r="2.1" fill="url(#sg)" opacity="0.16"/>
<circle cx="446.7" cy="791.1" r="3.0" fill="url(#sg)" opacity="0.29"/>
<circle cx="138.7" cy="250.1" r="2.9" fill="url(#sg)" opacity="0.13"/>
<circle cx="865.1" cy="253.3" r="3.0" fill="url(#sg)" opacity="0.12"/>
<circle cx="958.1" cy="289.8" r="2.0" fill="url(#sg)" opacity="0.12"/>
<circle cx="240.6" cy="362.6" r="2.9" fill="url(#sg)" opacity="0.16"/>
<circle cx="685.9" cy="133.5" r="2.0" fill="url(#sg)" opacity="0.26"/>
<circle cx="847.9" cy="178.7" r="1.9" fill="url(#sg)" opacity="0.14"/>
<circle cx="728.9" cy="409.0" r="2.1" fill="url(#sg)" opacity="0.16"/>
<circle cx="733.4" cy="572.7" r="2.8" fill="url(#sg)" opacity="0.22"/>
<circle cx="259.6" cy="77.7" r="2.7" fill="url(#sg)" opacity="0.19"/>
<circle cx="859.5" cy="69.7" r="2.8" fill="url(#sg)" opacity="0.18"/>
<circle cx="595.4" cy="38.9" r="2.9" fill="url(#sg)" opacity="0.21"/>
<circle cx="1033.2" cy="232.3" r="2.0" fill="url(#sg)" opacity="0.27"/>
<circle cx="450.0" cy="153.0" r="2.2" fill="url(#sg)" opacity="0.23"/>
<circle cx="31.4" cy="427.8" r="2.3" fill="url(#sg)" opacity="0.21"/>
<circle cx="165.5" cy="577.9" r="2.8" fill="url(#sg)" opacity="0.28"/>
<circle cx="396.7" cy="575.3" r="2.3" fill="url(#sg)" opacity="0.26"/>
<circle cx="96.7" cy="699.9" r="2.9" fill="url(#sg)" opacity="0.21"/>
<circle cx="618.9" cy="436.0" r="2.4" fill="url(#sg)" opacity="0.12"/>
<circle cx="1143.4" cy="199.5" r="2.0" fill="url(#sg)" opacity="0.14"/>
<circle cx="315.3" cy="657.0" r="1.8" fill="url(#sg)" opacity="0.14"/>
<circle cx="833.3" cy="177.4" r="1.8" fill="url(#sg)" opacity="0.23"/>
<circle cx="691.8" cy="430.2" r="2.6" fill="url(#sg)" opacity="0.14"/>
<circle cx="78.2" cy="121.9" r="2.4" fill="url(#sg)" opacity="0.21"/>
<circle cx="349.0" cy="121.1" r="2.3" fill="url(#sg)" opacity="0.14"/>
<circle cx="709.5" cy="690.9" r="2.0" fill="url(#sg)" opacity="0.22"/>
<circle cx="888.3" cy="153.7" r="2.8" fill="url(#sg)" opacity="0.29"/>
<circle cx="475.0" cy="351.2" r="2.8" fill="url(#sg)" opacity="0.21"/>
<circle cx="483.0" cy="752.7" r="2.7" fill="url(#sg)" opacity="0.18"/>
<circle cx="303.6" cy="285.3" r="2.3" fill="url(#sg)" opacity="0.30"/>
<circle cx="955.1" cy="730.7" r="2.8" fill="url(#sg)" opacity="0.27"/>
<circle cx="87.9" cy="425.9" r="2.9" fill="url(#sg)" opacity="0.29"/>
<circle cx="313.9" cy="352.5" r="2.6" fill="url(#sg)" opacity="0.19"/>
<circle cx="639.1" cy="80.4" r="2.3" fill="url(#sg)" opacity="0.21"/>
<circle cx="50.1" cy="134.5" r="3.0" fill="url(#sg)" opacity="0.26"/>
<circle cx="960.7" cy="708.9" r="2.9" fill="url(#sg)" opacity="0.13"/>
<circle cx="767.0" cy="231.9" r="2.6" fill="url(#sg)" opacity="0.17"/>
<circle cx="652.3" cy="739.7" r="2.5" fill="url(#sg)" opacity="0.17"/>
<circle cx="627.0" cy="361.4" r="2.9" fill="url(#sg)" opacity="0.17"/>
<circle cx="378.8" cy="526.2" r="1.9" fill="url(#sg)" opacity="0.23"/>
<circle cx="336.0" cy="386.6" r="2.4" fill="url(#sg)" opacity="0.15"/>
<circle cx="169.1" cy="128.3" r="2.2" fill="url(#sg)" opacity="0.19"/>
<circle cx="359.0" cy="214.7" r="1.9" fill="url(#sg)" opacity="0.22"/>
<circle cx="684.6" cy="528.4" r="2.0" fill="url(#sg)" opacity="0.25"/>
<circle cx="558.3" cy="449.5" r="2.5" fill="url(#sg)" opacity="0.20"/>
<circle cx="384.6" cy="213.8" r="2.1" fill="url(#sg)" opacity="0.21"/>
<circle cx="468.6" cy="478.6" r="1.8" fill="url(#sg)" opacity="0.18"/>
<circle cx="1021.5" cy="210.9" r="2.5" fill="url(#sg)" opacity="0.21"/>
<circle cx="355.0" cy="788.4" r="2.2" fill="url(#sg)" opacity="0.26"/>
<circle cx="209.1" cy="78.5" r="2.8" fill="url(#sg)" opacity="0.20"/>
<circle cx="97.6" cy="326.1" r="2.3" fill="url(#sg)" opacity="0.25"/>
<circle cx="152.2" cy="200.6" r="3.0" fill="url(#sg)" opacity="0.25"/>
<circle cx="204.5" cy="286.8" r="2.2" fill="url(#sg)" opacity="0.24"/>
<circle cx="737.8" cy="682.3" r="2.8" fill="url(#sg)" opacity="0.21"/>
<circle cx="879.3" cy="600.1" r="2.7" fill="url(#sg)" opacity="0.21"/>
<circle cx="932.6" cy="573.3" r="2.9" fill="url(#sg)" opacity="0.14"/>
<circle cx="1031.8" cy="30.3" r="2.7" fill="url(#sg)" opacity="0.23"/>
<circle cx="601.1" cy="769.3" r="2.5" fill="url(#sg)" opacity="0.20"/>
<circle cx="931.2" cy="699.9" r="2.5" fill="url(#sg)" opacity="0.19"/>
<circle cx="548.4" cy="380.0" r="2.7" fill="url(#sg)" opacity="0.17"/>
<circle cx="477.2" cy="455.2" r="2.3" fill="url(#sg)" opacity="0.18"/>
<circle cx="935.1" cy="682.0" r="2.4" fill="url(#sg)" opacity="0.20"/>
<circle cx="238.8" cy="261.4" r="2.0" fill="url(#sg)" opacity="0.22"/>
<circle cx="697.7" cy="94.8" r="2.9" fill="url(#sg)" opacity="0.18"/>
<circle cx="1133.4" cy="184.5" r="2.3" fill="url(#sg)" opacity="0.28"/>
<circle cx="38.3" cy="63.6" r="2.5" fill="url(#sg)" opacity="0.21"/>
<circle cx="648.0" cy="796.7" r="2.4" fill="url(#sg)" opacity="0.21"/>
<circle cx="817.4" cy="327.3" r="2.2" fill="url(#sg)" opacity="0.23"/>
<circle cx="431.5" cy="757.8" r="2.6" fill="url(#sg)" opacity="0.21"/>
<circle cx="140.3" cy="315.7" r="2.3" fill="url(#sg)" opacity="0.22"/>
<circle cx="689.0" cy="705.4" r="3.0" fill="url(#sg)" opacity="0.21"/>
<circle cx="534.4" cy="508.6" r="3.0" fill="url(#sg)" opacity="0.18"/>
<circle cx="638.3" cy="656.0" r="2.0" fill="url(#sg)" opacity="0.18"/>
<circle cx="618.0" cy="112.2" r="2.9" fill="url(#sg)" opacity="0.24"/>
<circle cx="206.6" cy="250.5" r="2.4" fill="url(#sg)" opacity="0.21"/>
<circle cx="243.3" cy="167.6" r="2.6" fill="url(#sg)" opacity="0.23"/>
<circle cx="433.9" cy="793.2" r="2.6" fill="url(#sg)" opacity="0.13"/>
<circle cx="501.2" cy="634.3" r="2.2" fill="url(#sg)" opacity="0.24"/>
<circle cx="30.5" cy="261.7" r="2.8" fill="url(#sg)" opacity="0.23"/>
<circle cx="797.7" cy="178.6" r="2.4" fill="url(#sg)" opacity="0.22"/>
<circle cx="333.3" cy="525.7" r="2.4" fill="url(#sg)" opacity="0.30"/>
<circle cx="689.5" cy="344.0" r="1.9" fill="url(#sg)" opacity="0.15"/>
<circle cx="903.2" cy="109.2" r="1.9" fill="url(#sg)" opacity="0.15"/>
<circle cx="629.5" cy="661.6" r="2.5" fill="url(#sg)" opacity="0.27"/>
<circle cx="97.7" cy="36.6" r="2.7" fill="url(#sg)" opacity="0.18"/>
<circle cx="852.4" cy="299.8" r="2.0" fill="url(#sg)" opacity="0.17"/>
<circle cx="140.9" cy="723.9" r="2.5" fill="url(#sg)" opacity="0.18"/>
<circle cx="545.6" cy="324.3" r="1.9" fill="url(#sg)" opacity="0.28"/>
<circle cx="699.0" cy="766.9" r="2.3" fill="url(#sg)" opacity="0.23"/>
<circle cx="314.0" cy="60.9" r="2.9" fill="url(#sg)" opacity="0.27"/>
<circle cx="389.6" cy="720.0" r="2.8" fill="url(#sg)" opacity="0.17"/>
<circle cx="721.9" cy="767.2" r="2.4" fill="url(#sg)" opacity="0.29"/>
<circle cx="306.6" cy="327.5" r="2.7" fill="url(#sg)" opacity="0.16"/>
<circle cx="383.1" cy="701.9" r="2.4" fill="url(#sg)" opacity="0.26"/>
<circle cx="307.1" cy="160.7" r="2.2" fill="url(#sg)" opacity="0.15"/>
<circle cx="1148.1" cy="251.1" r="2.5" fill="url(#sg)" opacity="0.14"/>
<circle cx="642.5" cy="324.3" r="2.3" fill="url(#sg)" opacity="0.13"/>
<circle cx="168.4" cy="663.7" r="2.2" fill="url(#sg)" opacity="0.16"/>
<circle cx="246.8" cy="245.6" r="2.1" fill="url(#sg)" opacity="0.13"/>
<circle cx="793.2" cy="290.2" r="2.0" fill="url(#sg)" opacity="0.25"/>
<circle cx="133.0" cy="234.9" r="2.8" fill="url(#sg)" opacity="0.14"/>
<circle cx="538.0" cy="671.8" r="2.8" fill="url(#sg)" opacity="0.15"/>
<circle cx="433.6" cy="584.0" r="2.3" fill="url(#sg)" opacity="0.29"/>
<circle cx="266.3" cy="760.2" r="2.4" fill="url(#sg)" opacity="0.16"/>
<circle cx="548.9" cy="128.0" r="2.6" fill="url(#sg)" opacity="0.17"/>
<circle cx="451.0" cy="216.9" r="2.5" fill="url(#sg)" opacity="0.16"/>
<circle cx="1033.6" cy="121.7" r="2.4" fill="url(#sg)" opacity="0.22"/>
<circle cx="338.3" cy="622.0" r="2.3" fill="url(#sg)" opacity="0.24"/>
<circle cx="681.7" cy="266.6" r="2.3" fill="url(#sg)" opacity="0.14"/>
<circle cx="230.5" cy="683.1" r="2.2" fill="url(#sg)" opacity="0.24"/>
<circle cx="151.9" cy="460.3" r="2.2" fill="url(#sg)" opacity="0.21"/>
<circle cx="369.0" cy="77.8" r="2.2" fill="url(#sg)" opacity="0.16"/>
<circle cx="171.7" cy="579.6" r="2.1" fill="url(#sg)" opacity="0.19"/>
<circle cx="178.7" cy="240.2" r="1.8" fill="url(#sg)" opacity="0.24"/>
<circle cx="792.5" cy="298.0" r="2.3" fill="url(#sg)" opacity="0.24"/>
<circle cx="833.6" cy="218.5" r="2.8" fill="url(#sg)" opacity="0.18"/>
<circle cx="752.3" cy="167.1" r="1.9" fill="url(#sg)" opacity="0.28"/>
<circle cx="873.8" cy="576.4" r="1.8" fill="url(#sg)" opacity="0.13"/>
<circle cx="213.1" cy="179.7" r="2.2" fill="url(#sg)" opacity="0.19"/>
<circle cx="71.3" cy="266.7" r="2.6" fill="url(#sg)" opacity="0.15"/>
<circle cx="853.7" cy="223.4" r="2.3" fill="url(#sg)" opacity="0.24"/>
<circle cx="429.1" cy="27.7" r="2.8" fill="url(#sg)" opacity="0.26"/>
<circle cx="356.7" cy="60.1" r="2.8" fill="url(#sg)" opacity="0.23"/>
<circle cx="80.7" cy="215.5" r="1.9" fill="url(#sg)" opacity="0.26"/>
<circle cx="268.7" cy="732.1" r="2.7" fill="url(#sg)" opacity="0.14"/>
<circle cx="828.4" cy="330.5" r="2.7" fill="url(#sg)" opacity="0.27"/>
<circle cx="350.7" cy="96.3" r="2.9" fill="url(#sg)" opacity="0.20"/>
<circle cx="879.1" cy="666.9" r="2.6" fill="url(#sg)" opacity="0.20"/>
<circle cx="88.7" cy="565.4" r="2.3" fill="url(#sg)" opacity="0.21"/>
<circle cx="1098.0" cy="125.4" r="2.7" fill="url(#sg)" opacity="0.13"/>
<circle cx="837.7" cy="648.2" r="2.1" fill="url(#sg)" opacity="0.22"/>
<circle cx="654.2" cy="219.5" r="1.9" fill="url(#sg)" opacity="0.18"/>
<circle cx="501.4" cy="182.3" r="2.2" fill="url(#sg)" opacity="0.14"/>
<circle cx="842.6" cy="543.8" r="2.1" fill="url(#sg)" opacity="0.16"/>
<circle cx="621.3" cy="370.1" r="2.9" fill="url(#sg)" opacity="0.18"/>
<circle cx="371.8" cy="709.1" r="2.0" fill="url(#sg)" opacity="0.22"/>
<circle cx="411.3" cy="655.7" r="2.5" fill="url(#sg)" opacity="0.26"/>
<circle cx="221.4" cy="540.9" r="2.5" fill="url(#sg)" opacity="0.20"/>
<circle cx="910.9" cy="667.8" r="1.9" fill="url(#sg)" opacity="0.17"/>
<circle cx="442.4" cy="186.2" r="1.9" fill="url(#sg)" opacity="0.17"/>
<circle cx="253.7" cy="568.0" r="2.3" fill="url(#sg)" opacity="0.14"/>
<circle cx="400.8" cy="388.3" r="2.2" fill="url(#sg)" opacity="0.15"/>
<circle cx="109.0" cy="35.3" r="3.0" fill="url(#sg)" opacity="0.26"/>
<circle cx="123.0" cy="579.9" r="3.0" fill="url(#sg)" opacity="0.22"/>
<circle cx="151.7" cy="403.9" r="2.3" fill="url(#sg)" opacity="0.15"/>
<circle cx="653.2" cy="33.4" r="2.9" fill="url(#sg)" opacity="0.24"/>
<circle cx="751.0" cy="748.1" r="2.6" fill="url(#sg)" opacity="0.17"/>
<circle cx="310.1" cy="133.9" r="1.8" fill="url(#sg)" opacity="0.26"/>
<circle cx="995.7" cy="255.5" r="2.0" fill="url(#sg)" opacity="0.23"/>
<circle cx="220.6" cy="631.9" r="2.8" fill="url(#sg)" opacity="0.25"/>
<circle cx="403.3" cy="169.3" r="2.8" fill="url(#sg)" opacity="0.18"/>
<circle cx="451.6" cy="451.9" r="2.2" fill="url(#sg)" opacity="0.27"/>
<circle cx="302.5" cy="58.8" r="2.5" fill="url(#sg)" opacity="0.23"/>
<circle cx="597.0" cy="412.1" r="2.0" fill="url(#sg)" opacity="0.17"/>
<circle cx="697.2" cy="88.9" r="2.6" fill="url(#sg)" opacity="0.15"/>
<circle cx="537.9" cy="774.7" r="1.9" fill="url(#sg)" opacity="0.13"/>
<circle cx="533.6" cy="174.1" r="2.7" fill="url(#sg)" opacity="0.12"/>
<circle cx="934.9" cy="355.0" r="2.1" fill="url(#sg)" opacity="0.24"/>
<circle cx="620.4" cy="351.8" r="2.2" fill="url(#sg)" opacity="0.20"/>
<circle cx="795.4" cy="663.9" r="2.9" fill="url(#sg)" opacity="0.15"/>
<circle cx="367.6" cy="368.7" r="2.5" fill="url(#sg)" opacity="0.18"/>
<circle cx="251.7" cy="92.6" r="2.2" fill="url(#sg)" opacity="0.20"/>
<circle cx="962.9" cy="73.3" r="2.6" fill="url(#sg)" opacity="0.23"/>
<circle cx="369.1" cy="467.3" r="2.9" fill="url(#sg)" opacity="0.21"/>
<circle cx="773.7" cy="257.8" r="2.2" fill="url(#sg)" opacity="0.28"/>
<circle cx="58.2" cy="172.6" r="2.6" fill="url(#sg)" opacity="0.20"/>
<circle cx="124.4" cy="536.2" r="2.2" fill="url(#sg)" opacity="0.22"/>
<circle cx="506.9" cy="435.6" r="2.5" fill="url(#sg)" opacity="0.19"/>
<circle cx="158.0" cy="166.2" r="2.9" fill="url(#sg)" opacity="0.22"/>
<circle cx="155.7" cy="691.7" r="2.1" fill="url(#sg)" opacity="0.14"/>
<circle cx="639.0" cy="220.9" r="2.4" fill="url(#sg)" opacity="0.22"/>
<circle cx="287.7" cy="468.6" r="1.9" fill="url(#sg)" opacity="0.21"/>
<circle cx="705.7" cy="88.9" r="2.3" fill="url(#sg)" opacity="0.13"/>
<circle cx="533.7" cy="692.7" r="2.5" fill="url(#sg)" opacity="0.25"/>
<circle cx="900.2" cy="115.4" r="3.0" fill="url(#sg)" opacity="0.25"/>
<circle cx="143.9" cy="667.1" r="2.3" fill="url(#sg)" opacity="0.15"/>
<circle cx="921.1" cy="132.5" r="2.7" fill="url(#sg)" opacity="0.13"/>
<circle cx="299.6" cy="314.1" r="1.8" fill="url(#sg)" opacity="0.23"/>
<circle cx="272.2" cy="258.2" r="2.6" fill="url(#sg)" opacity="0.20"/>
<circle cx="220.0" cy="601.7" r="2.2" fill="url(#sg)" opacity="0.26"/>
<circle cx="812.0" cy="663.6" r="1.9" fill="url(#sg)" opacity="0.19"/>
<circle cx="877.5" cy="757.9" r="2.7" fill="url(#sg)" opacity="0.13"/>
<circle cx="723.4" cy="103.8" r="2.5" fill="url(#sg)" opacity="0.26"/>
<circle cx="156.5" cy="740.5" r="2.6" fill="url(#sg)" opacity="0.17"/>
<circle cx="249.1" cy="371.5" r="2.8" fill="url(#sg)" opacity="0.22"/>
<circle cx="157.2" cy="43.2" r="1.9" fill="url(#sg)" opacity="0.26"/>
<circle cx="240.0" cy="454.3" r="2.1" fill="url(#sg)" opacity="0.24"/>
<circle cx="465.8" cy="138.2" r="2.9" fill="url(#sg)" opacity="0.22"/>
<circle cx="822.4" cy="650.1" r="2.9" fill="url(#sg)" opacity="0.12"/>
<circle cx="421.4" cy="143.4" r="2.4" fill="url(#sg)" opacity="0.28"/>
<circle cx="950.5" cy="54.3" r="2.0" fill="url(#sg)" opacity="0.27"/>
<circle cx="810.8" cy="329.7" r="2.4" fill="url(#sg)" opacity="0.15"/>
<circle cx="113.6" cy="280.9" r="2.1" fill="url(#sg)" opacity="0.28"/>
<circle cx="706.6" cy="60.7" r="2.0" fill="url(#sg)" opacity="0.18"/>
<circle cx="566.3" cy="471.9" r="2.3" fill="url(#sg)" opacity="0.18"/>
<circle cx="32.9" cy="473.5" r="2.2" fill="url(#sg)" opacity="0.12"/>
<circle cx="556.6" cy="787.5" r="1.9" fill="url(#sg)" opacity="0.15"/>
<circle cx="801.0" cy="237.2" r="2.1" fill="url(#sg)" opacity="0.21"/>
<circle cx="328.7" cy="465.7" r="2.4" fill="url(#sg)" opacity="0.29"/>
<circle cx="1172.0" cy="53.3" r="2.5" fill="url(#sg)" opacity="0.26"/>
<circle cx="757.2" cy="516.3" r="2.2" fill="url(#sg)" opacity="0.17"/>
<circle cx="944.6" cy="699.9" r="2.9" fill="url(#sg)" opacity="0.24"/>
<circle cx="377.1" cy="615.5" r="2.7" fill="url(#sg)" opacity="0.21"/>
<circle cx="759.7" cy="297.2" r="2.5" fill="url(#sg)" opacity="0.19"/>
<circle cx="95.8" cy="287.0" r="2.2" fill="url(#sg)" opacity="0.30"/>
<circle cx="582.1" cy="310.2" r="2.1" fill="url(#sg)" opacity="0.16"/>
<circle cx="429.4" cy="131.6" r="1.8" fill="url(#sg)" opacity="0.28"/>
<circle cx="549.4" cy="370.5" r="2.5" fill="url(#sg)" opacity="0.17"/>
<circle cx="221.1" cy="78.1" r="2.2" fill="url(#sg)" opacity="0.18"/>
<circle cx="865.3" cy="452.0" r="2.9" fill="url(#sg)" opacity="0.18"/>
<circle cx="118.4" cy="164.8" r="2.5" fill="url(#sg)" opacity="0.30"/>
<circle cx="438.3" cy="624.1" r="2.3" fill="url(#sg)" opacity="0.28"/>
<circle cx="104.2" cy="400.6" r="2.9" fill="url(#sg)" opacity="0.17"/>
<circle cx="323.5" cy="44.8" r="2.0" fill="url(#sg)" opacity="0.17"/>
<circle cx="839.6" cy="195.3" r="2.3" fill="url(#sg)" opacity="0.16"/>
<circle cx="722.4" cy="693.2" r="2.6" fill="url(#sg)" opacity="0.16"/>
<circle cx="873.6" cy="769.6" r="2.5" fill="url(#sg)" opacity="0.13"/>
<circle cx="960.9" cy="702.0" r="2.2" fill="url(#sg)" opacity="0.14"/>
<circle cx="243.3" cy="441.0" r="2.9" fill="url(#sg)" opacity="0.24"/>
<circle cx="1091.9" cy="190.6" r="2.2" fill="url(#sg)" opacity="0.25"/>
<circle cx="775.5" cy="339.5" r="2.6" fill="url(#sg)" opacity="0.18"/>
<circle cx="92.4" cy="346.4" r="1.9" fill="url(#sg)" opacity="0.23"/>
<circle cx="412.4" cy="408.2" r="2.5" fill="url(#sg)" opacity="0.17"/>
<circle cx="561.2" cy="37.5" r="2.9" fill="url(#sg)" opacity="0.22"/>
<circle cx="1166.6" cy="70.2" r="2.5" fill="url(#sg)" opacity="0.25"/>
<circle cx="406.2" cy="99.0" r="2.0" fill="url(#sg)" opacity="0.15"/>
<circle cx="912.1" cy="96.3" r="2.8" fill="url(#sg)" opacity="0.20"/>
<circle cx="648.2" cy="480.7" r="2.5" fill="url(#sg)" opacity="0.24"/>
<circle cx="720.8" cy="282.1" r="2.7" fill="url(#sg)" opacity="0.17"/>
<circle cx="847.7" cy="615.5" r="2.7" fill="url(#sg)" opacity="0.18"/>
<circle cx="918.4" cy="780.6" r="2.3" fill="url(#sg)" opacity="0.17"/>
<circle cx="630.4" cy="752.5" r="2.0" fill="url(#sg)" opacity="0.12"/>
<circle cx="575.5" cy="532.3" r="2.7" fill="url(#sg)" opacity="0.19"/>
<circle cx="1168.9" cy="202.9" r="2.7" fill="url(#sg)" opacity="0.14"/>
<circle cx="58.3" cy="130.4" r="1.9" fill="url(#sg)" opacity="0.21"/>
<circle cx="667.3" cy="167.2" r="2.9" fill="url(#sg)" opacity="0.19"/>
<circle cx="198.5" cy="163.8" r="2.7" fill="url(#sg)" opacity="0.29"/>
<circle cx="213.2" cy="49.4" r="2.7" fill="url(#sg)" opacity="0.16"/>
<circle cx="760.7" cy="292.4" r="2.8" fill="url(#sg)" opacity="0.20"/>
<circle cx="400.0" cy="723.6" r="1.9" fill="url(#sg)" opacity="0.25"/>
<circle cx="101.6" cy="524.6" r="2.3" fill="url(#sg)" opacity="0.28"/>
<circle cx="95.3" cy="462.0" r="2.3" fill="url(#sg)" opacity="0.29"/>
<circle cx="284.8" cy="221.2" r="2.1" fill="url(#sg)" opacity="0.20"/>
<circle cx="293.2" cy="183.7" r="2.7" fill="url(#sg)" opacity="0.24"/>
<circle cx="370.7" cy="793.6" r="2.1" fill="url(#sg)" opacity="0.22"/>
<circle cx="207.0" cy="692.4" r="2.8" fill="url(#sg)" opacity="0.17"/>
<circle cx="894.0" cy="661.4" r="2.1" fill="url(#sg)" opacity="0.18"/>
<circle cx="586.8" cy="713.9" r="2.0" fill="url(#sg)" opacity="0.24"/>
<circle cx="716.2" cy="376.3" r="2.5" fill="url(#sg)" opacity="0.28"/>
<circle cx="268.3" cy="708.2" r="2.2" fill="url(#sg)" opacity="0.26"/>
<circle cx="1023.2" cy="167.6" r="2.8" fill="url(#sg)" opacity="0.30"/>
<circle cx="369.7" cy="45.8" r="1.9" fill="url(#sg)" opacity="0.30"/>
<circle cx="36.9" cy="729.8" r="2.0" fill="url(#sg)" opacity="0.25"/>
<circle cx="138.7" cy="157.1" r="2.6" fill="url(#sg)" opacity="0.14"/>
<circle cx="418.2" cy="735.2" r="2.7" fill="url(#sg)" opacity="0.28"/>
<circle cx="1157.5" cy="52.4" r="2.1" fill="url(#sg)" opacity="0.26"/>
<circle cx="822.3" cy="56.2" r="2.4" fill="url(#sg)" opacity="0.16"/>
<circle cx="523.2" cy="107.9" r="1.8" fill="url(#sg)" opacity="0.30"/>
<circle cx="391.5" cy="704.4" r="1.9" fill="url(#sg)" opacity="0.21"/>
<circle cx="182.9" cy="357.4" r="2.0" fill="url(#sg)" opacity="0.24"/>
<circle cx="196.9" cy="596.2" r="2.4" fill="url(#sg)" opacity="0.14"/>
<circle cx="434.4" cy="409.6" r="2.9" fill="url(#sg)" opacity="0.18"/>
<circle cx="274.5" cy="772.9" r="2.9" fill="url(#sg)" opacity="0.25"/>
<circle cx="341.3" cy="163.6" r="2.1" fill="url(#sg)" opacity="0.13"/>
<circle cx="75.9" cy="419.2" r="2.3" fill="url(#sg)" opacity="0.22"/>
<circle cx="444.8" cy="35.2" r="2.6" fill="url(#sg)" opacity="0.24"/>
<circle cx="654.3" cy="450.1" r="2.6" fill="url(#sg)" opacity="0.30"/>
<circle cx="487.2" cy="272.4" r="2.3" fill="url(#sg)" opacity="0.30"/>
<circle cx="473.1" cy="324.2" r="2.3" fill="url(#sg)" opacity="0.15"/>
<circle cx="1179.1" cy="31.0" r="2.5" fill="url(#sg)" opacity="0.29"/>
<circle cx="320.1" cy="498.0" r="2.3" fill="url(#sg)" opacity="0.16"/>
<circle cx="255.2" cy="116.6" r="2.8" fill="url(#sg)" opacity="0.26"/>
<circle cx="1075.3" cy="65.2" r="2.6" fill="url(#sg)" opacity="0.18"/>
<circle cx="772.4" cy="450.2" r="2.2" fill="url(#sg)" opacity="0.29"/>
<circle cx="27.1" cy="602.3" r="2.8" fill="url(#sg)" opacity="0.21"/>
<circle cx="710.1" cy="794.0" r="2.1" fill="url(#sg)" opacity="0.23"/>
<circle cx="884.5" cy="319.1" r="2.7" fill="url(#sg)" opacity="0.19"/>
<circle cx="633.8" cy="499.5" r="2.6" fill="url(#sg)" opacity="0.18"/>
<circle cx="752.4" cy="445.7" r="2.1" fill="url(#sg)" opacity="0.23"/>
<circle cx="332.0" cy="727.6" r="2.4" fill="url(#sg)" opacity="0.25"/>
<circle cx="629.0" cy="394.5" r="2.1" fill="url(#sg)" opacity="0.15"/>
<circle cx="631.1" cy="433.7" r="2.8" fill="url(#sg)" opacity="0.16"/>
<circle cx="225.1" cy="660.7" r="2.4" fill="url(#sg)" opacity="0.24"/>
<circle cx="1028.3" cy="60.4" r="2.3" fill="url(#sg)" opacity="0.27"/>
<circle cx="970.5" cy="121.9" r="2.0" fill="url(#sg)" opacity="0.17"/>
<circle cx="144.7" cy="302.0" r="2.8" fill="url(#sg)" opacity="0.21"/>
<circle cx="549.0" cy="94.8" r="2.3" fill="url(#sg)" opacity="0.30"/>
<circle cx="828.7" cy="373.4" r="2.4" fill="url(#sg)" opacity="0.26"/>
<circle cx="902.4" cy="142.6" r="2.6" fill="url(#sg)" opacity="0.19"/>
<circle cx="627.4" cy="210.2" r="2.2" fill="url(#sg)" opacity="0.18"/>
<circle cx="466.2" cy="40.7" r="2.0" fill="url(#sg)" opacity="0.22"/>
<circle cx="92.7" cy="164.6" r="2.7" fill="url(#sg)" opacity="0.17"/>
<circle cx="400.2" cy="213.5" r="2.8" fill="url(#sg)" opacity="0.14"/>
<circle cx="760.7" cy="689.2" r="2.0" fill="url(#sg)" opacity="0.20"/>
<circle cx="941.1" cy="503.4" r="2.2" fill="url(#sg)" opacity="0.13"/>
<circle cx="537.1" cy="310.1" r="2.7" fill="url(#sg)" opacity="0.17"/>
<circle cx="497.2" cy="526.8" r="2.8" fill="url(#sg)" opacity="0.18"/>
<circle cx="471.1" cy="473.2" r="2.9" fill="url(#sg)" opacity="0.15"/>
<circle cx="456.1" cy="540.2" r="2.2" fill="url(#sg)" opacity="0.13"/>
<circle cx="899.2" cy="319.5" r="2.4" fill="url(#sg)" opacity="0.21"/>
<circle cx="55.6" cy="484.0" r="2.4" fill="url(#sg)" opacity="0.20"/>
<circle cx="573.0" cy="713.5" r="2.3" fill="url(#sg)" opacity="0.21"/>
<circle cx="617.1" cy="662.8" r="2.6" fill="url(#sg)" opacity="0.25"/>
<circle cx="489.9" cy="58.3" r="2.6" fill="url(#sg)" opacity="0.22"/>
<circle cx="914.5" cy="620.6" r="1.9" fill="url(#sg)" opacity="0.16"/>
<circle cx="115.1" cy="657.3" r="1.9" fill="url(#sg)" opacity="0.14"/>
<circle cx="896.1" cy="462.2" r="1.9" fill="url(#sg)" opacity="0.24"/>
<circle cx="847.3" cy="399.2" r="1.9" fill="url(#sg)" opacity="0.24"/>
<circle cx="508.7" cy="477.2" r="3.0" fill="url(#sg)" opacity="0.27"/>
<circle cx="1033.1" cy="139.2" r="2.2" fill="url(#sg)" opacity="0.21"/>
<circle cx="33.0" cy="789.3" r="2.1" fill="url(#sg)" opacity="0.17"/>
<circle cx="387.6" cy="223.6" r="2.8" fill="url(#sg)" opacity="0.22"/>
<circle cx="616.2" cy="351.0" r="1.9" fill="url(#sg)" opacity="0.17"/>
<circle cx="1015.4" cy="225.2" r="2.0" fill="url(#sg)" opacity="0.13"/>
<circle cx="646.1" cy="315.2" r="2.4" fill="url(#sg)" opacity="0.21"/>
<circle cx="700.3" cy="309.0" r="2.8" fill="url(#sg)" opacity="0.16"/>
<circle cx="85.1" cy="269.3" r="2.4" fill="url(#sg)" opacity="0.19"/>
<circle cx="678.5" cy="276.5" r="2.1" fill="url(#sg)" opacity="0.26"/>
<circle cx="362.7" cy="574.8" r="2.8" fill="url(#sg)" opacity="0.23"/>
<circle cx="551.1" cy="747.8" r="2.3" fill="url(#sg)" opacity="0.28"/>
<circle cx="92.7" cy="361.4" r="2.6" fill="url(#sg)" opacity="0.13"/>
<circle cx="1022.3" cy="82.5" r="2.5" fill="url(#sg)" opacity="0.15"/>
<circle cx="950.8" cy="411.1" r="2.6" fill="url(#sg)" opacity="0.24"/>
<circle cx="366.6" cy="189.7" r="2.8" fill="url(#sg)" opacity="0.15"/>
<circle cx="1086.1" cy="186.5" r="1.9" fill="url(#sg)" opacity="0.14"/>
<circle cx="931.8" cy="760.1" r="2.3" fill="url(#sg)" opacity="0.24"/>
<circle cx="323.5" cy="725.4" r="2.6" fill="url(#sg)" opacity="0.15"/>
<circle cx="91.4" cy="563.4" r="1.9" fill="url(#sg)" opacity="0.27"/>
<circle cx="365.1" cy="206.4" r="2.5" fill="url(#sg)" opacity="0.18"/>
<circle cx="673.5" cy="145.7" r="2.9" fill="url(#sg)" opacity="0.18"/>
<circle cx="997.7" cy="144.1" r="2.8" fill="url(#sg)" opacity="0.30"/>
<circle cx="478.2" cy="52.4" r="2.3" fill="url(#sg)" opacity="0.24"/>
<circle cx="284.0" cy="447.7" r="1.9" fill="url(#sg)" opacity="0.20"/>
<circle cx="867.1" cy="358.4" r="2.6" fill="url(#sg)" opacity="0.14"/>
<circle cx="982.9" cy="121.2" r="2.9" fill="url(#sg)" opacity="0.30"/>
<circle cx="361.8" cy="295.3" r="2.7" fill="url(#sg)" opacity="0.21"/>
<circle cx="1100.0" cy="98.7" r="2.4" fill="url(#sg)" opacity="0.28"/>
<circle cx="716.4" cy="443.9" r="1.9" fill="url(#sg)" opacity="0.15"/>
<circle cx="339.2" cy="715.6" r="2.8" fill="url(#sg)" opacity="0.16"/>
<circle cx="1093.9" cy="52.0" r="2.5" fill="url(#sg)" opacity="0.29"/>
<circle cx="423.7" cy="755.1" r="2.6" fill="url(#sg)" opacity="0.13"/>
<circle cx="410.8" cy="373.7" r="2.1" fill="url(#sg)" opacity="0.25"/>
<circle cx="232.6" cy="634.3" r="2.2" fill="url(#sg)" opacity="0.13"/>
<circle cx="671.8" cy="100.8" r="2.5" fill="url(#sg)" opacity="0.26"/>
<circle cx="713.9" cy="382.7" r="1.8" fill="url(#sg)" opacity="0.21"/>
<circle cx="138.3" cy="525.7" r="2.0" fill="url(#sg)" opacity="0.22"/>
<circle cx="433.6" cy="315.9" r="2.6" fill="url(#sg)" opacity="0.15"/>
<circle cx="222.0" cy="752.9" r="2.2" fill="url(#sg)" opacity="0.27"/>
<circle cx="198.1" cy="99.5" r="2.9" fill="url(#sg)" opacity="0.14"/>
<circle cx="599.0" cy="440.2" r="1.9" fill="url(#sg)" opacity="0.20"/>
<circle cx="215.5" cy="439.8" r="2.4" fill="url(#sg)" opacity="0.19"/>
<circle cx="254.4" cy="338.3" r="2.0" fill="url(#sg)" opacity="0.14"/>
<circle cx="303.1" cy="698.9" r="2.4" fill="url(#sg)" opacity="0.28"/>
<circle cx="43.5" cy="754.3" r="2.4" fill="url(#sg)" opacity="0.26"/>
<circle cx="684.8" cy="558.2" r="2.1" fill="url(#sg)" opacity="0.26"/>
<circle cx="203.5" cy="230.7" r="1.8" fill="url(#sg)" opacity="0.19"/>
<circle cx="624.4" cy="252.1" r="2.9" fill="url(#sg)" opacity="0.14"/>
<circle cx="694.2" cy="207.4" r="2.5" fill="url(#sg)" opacity="0.26"/>
<circle cx="847.0" cy="74.9" r="2.1" fill="url(#sg)" opacity="0.23"/>
<circle cx="1161.3" cy="58.8" r="2.5" fill="url(#sg)" opacity="0.24"/>
<circle cx="966.9" cy="290.7" r="2.8" fill="url(#sg)" opacity="0.20"/>
<circle cx="1089.6" cy="35.3" r="2.9" fill="url(#sg)" opacity="0.19"/>
<circle cx="496.2" cy="94.9" r="2.1" fill="url(#sg)" opacity="0.25"/>
<rect x="273.5" y="335.5" width="396" height="322" fill="none" stroke="#4fc44f" stroke-width="1"/>
<text x="276" y="349" font-family="Liberation Sans" font-size="12" letter-spacing="0.3" fill="#e6e6e6">Preview01</text>
</svg>

<!-- dialog -->
<div class="a" id="dlg"></div>
<div class="a" id="dcontent"></div>
<div class="a" id="dfoot"></div>
<!-- dialog icon -->
<svg class="a" style="left:973px;top:298px" width="20" height="20" viewBox="973 298 20 20">
 <defs>
  <pattern id="chk" x="975" y="300" width="4" height="4" patternUnits="userSpaceOnUse"><rect width="4" height="4" fill="#f4f4f4"/><rect width="2" height="2" fill="#8a8a8a"/><rect x="2" y="2" width="2" height="2" fill="#8a8a8a"/></pattern>
  <radialGradient id="ig" cx="991" cy="316" r="15" gradientUnits="userSpaceOnUse"><stop offset="0" stop-color="#0008d8"/><stop offset="0.55" stop-color="#3a6cff"/><stop offset="1" stop-color="#a8c8ff"/></radialGradient>
  <clipPath id="icl"><rect x="975" y="300" width="15" height="15"/></clipPath>
 </defs>
 <rect x="975" y="300" width="15" height="15" fill="url(#chk)"/>
 <circle cx="991" cy="316" r="14.5" fill="url(#ig)" clip-path="url(#icl)"/>
 <rect x="974.5" y="299.5" width="16" height="16" fill="none" stroke="#12122a" stroke-width="1.2"/>
</svg>
<div class="a" style="left:1232px;top:299px;font-weight:bold;font-size:13px;color:#fff;letter-spacing:0.2px">TGVDenoise</div>
<svg class="a" style="left:1550px;top:300px" width="40" height="16" viewBox="1550 300 40 16">
 <rect x="1555.5" y="304" width="9.5" height="2" fill="#fff"/>
 <polygon points="1555.5,311.5 1565,311.5 1560.25,306.5" fill="#fff"/>
 <path d="M1578,304 L1585.5,311.5 M1585.5,304 L1578,311.5" stroke="#fff" stroke-width="2.2"/>
</svg>

<!-- radio row -->
<div class="a" style="left:1097px;top:327.5px;width:12.5px;height:12.5px;border-radius:50%;border:2px solid #79a6f2;background:#f2f2f2"></div>
<div class="lbl" style="left:1116px;top:328px">RGB/K mode</div>
<div class="a" style="left:1198px;top:327.5px;width:13px;height:13px;border-radius:50%;border:1px solid #333;background:#f6f6f6"></div>
<div class="a" style="left:1202px;top:331.5px;width:5px;height:5px;border-radius:50%;background:#000"></div>
<div class="lbl" style="left:1217px;top:328px;letter-spacing:0.7px">CIE L*a*b* mode</div>

<!-- tabs & group box -->
<div class="a" style="left:979px;top:373px;width:606px;height:178px;border:1px solid #8c8c8c"></div>
<div class="a" style="left:1049px;top:351px;width:93px;height:23px;border:1px solid #8c8c8c;border-bottom:none;background:linear-gradient(#d8d8d8,#c9c9c9)"></div>
<div class="a" style="left:979px;top:349px;width:71px;height:25px;border:1px solid #8c8c8c;border-bottom:none;background:linear-gradient(#ececec,#cfcfcf)"></div>
<div class="lbl" style="left:988px;top:357px;letter-spacing:0.15px">Lightness</div>
<div class="lbl" style="left:1058px;top:357px;letter-spacing:0.3px">Chrominance</div>

<div class="cb" style="left:1097px;top:384px"></div>
<svg class="a" style="left:1097px;top:384px" width="13" height="13"><path d="M2.5,6.5 L5,9.5 L10.5,3" stroke="#000" stroke-width="2" fill="none"/></svg>
<div class="lbl" style="left:1116px;top:386px">Apply</div>

<div class="lbl r" style="left:980px;width:112px;top:409px">Strength:</div>
<div class="tf" style="left:1097px;top:404px;width:84px">10.0000000</div>
<div class="tf" style="left:1185px;top:404px;width:41px">1.00</div>
<div class="trk" style="left:1230px;top:412px;width:292px"></div>
<div class="hnd" style="left:1230px;top:409px"></div>
<div class="spin" style="left:1528px;top:404px;width:45px">1<div class="spb"><div class="up"></div><div class="dn"></div></div></div>

<div class="lbl r" style="left:980px;width:112px;top:432px">Edge protection:</div>
<div class="tf" style="left:1097px;top:427px;width:84px">0.00000180</div>
<div class="tf" style="left:1185px;top:427px;width:41px">1.80</div>
<div class="trk" style="left:1230px;top:435px;width:292px"></div>
<div class="fill" style="left:1230px;top:435px;width:31px"></div>
<div class="hnd" style="left:1255px;top:432px"></div>
<div class="spin" style="left:1528px;top:427px;width:45px">-6<div class="spb"><div class="up"></div><div class="dn"></div></div></div>

<div class="lbl r" style="left:980px;width:112px;top:455px">Smoothness:</div>
<div class="tf" style="left:1097px;top:450px;width:84px">20.0000000</div>
<div class="tf" style="left:1185px;top:450px;width:41px">2.00</div>
<div class="trk" style="left:1230px;top:458px;width:292px"></div>
<div class="fill" style="left:1230px;top:458px;width:37px"></div>
<div class="hnd" style="left:1261px;top:455px"></div>
<div class="spin" style="left:1528px;top:450px;width:45px">1<div class="spb"><div class="up"></div><div class="dn"></div></div></div>

<div class="lbl r" style="left:980px;width:112px;top:477px">Iterations:</div>
<div class="spin" style="left:1097px;top:473px;width:68px">900<div class="spb"><div class="up"></div><div class="dn"></div></div></div>

<div class="cb" style="left:1097px;top:500px"></div>
<div class="lbl" style="left:1116px;top:502px">Automatic convergence</div>

<div class="lbl r" style="left:980px;width:112px;top:523px">Convergence:</div>
<div class="tf dis" style="left:1097px;top:518px;width:84px">0.00400000</div>
<div class="tf dis" style="left:1185px;top:518px;width:41px">4.00</div>
<div class="trk" style="left:1230px;top:526px;width:292px;background:#e0e0e0"></div>
<div class="fill" style="left:1230px;top:526px;width:100px"></div>
<div class="hnd" style="left:1324px;top:523px"></div>
<div class="spin" style="left:1528px;top:518px;width:45px;background:#cfcfd1;color:#8a8a8a;border-color:#9a9a9a">-3<div class="spb" style="background:linear-gradient(#dcdcdc,#cacaca)"><div class="up" style="border-bottom-color:#999"></div><div class="dn" style="border-top-color:#999"></div></div></div>

<!-- local support -->
<div class="a" style="left:979px;top:559px;width:605px;height:19px;background:#bfbcb4"></div>
<div class="cb" style="left:983px;top:561px"></div>
<svg class="a" style="left:983px;top:561px" width="13" height="13"><path d="M2.5,6.5 L5,9.5 L10.5,3" stroke="#000" stroke-width="2" fill="none"/></svg>
<div class="lbl" style="left:1004px;top:563px;font-weight:bold;color:#1b5ec0;letter-spacing:0.6px">Local Support</div>
<svg class="a" style="left:1563px;top:561px" width="16" height="14" viewBox="1563 561 16 14"><polygon points="1566.5,568.5 1576.5,568.5 1571.5,563" fill="#0b5fc4"/><polygon points="1566,573.2 1577,573.2 1571.5,567.2" fill="#0b5fc4"/></svg>

<div class="cb" style="left:1097px;top:584px"></div>
<div class="lbl" style="left:1116px;top:586px">Preview</div>

<div class="lbl r" style="left:980px;width:112px;top:607px">Support image:</div>
<div class="tf" style="left:1097px;top:602px;width:468px">TGVSupport</div>
<svg class="a" style="left:1570px;top:605px" width="12" height="11" viewBox="0 0 12 11"><path d="M0.5,1 h4 l1,1.5 h6 v8 h-11 z" fill="#3b3b3b"/><path d="M0.5,4 h11" stroke="#d5d5d7" stroke-width="0.8"/></svg>

<div class="lbl r" style="left:980px;width:112px;top:631px">Noise reduction:</div>
<div class="spin" style="left:1097px;top:626px;width:40px">1<div class="spb"><div class="up"></div><div class="dn"></div></div></div>

<div class="lbl r" style="left:980px;width:112px;top:655px">Midtones:</div>
<div class="tf" style="left:1097px;top:650px;width:84px">0.50000</div>
<div class="trk" style="left:1185px;top:658px;width:374px"></div>
<div class="fill" style="left:1185px;top:658px;width:188px"></div>
<div class="hnd" style="left:1367px;top:655px"></div>
<svg class="clr" style="left:1565px;top:655px" viewBox="0 0 15 10"><path d="M0.5,5 L4.5,0.5 H14.5 V9.5 H4.5 Z" fill="#4a4a4a"/><path d="M7,2.3 L12,7.7 M12,2.3 L7,7.7" stroke="#e8e8e8" stroke-width="1.8"/></svg>

<div class="lbl r" style="left:980px;width:112px;top:679px">Shadows:</div>
<div class="tf" style="left:1097px;top:674px;width:84px;border-color:#7da7ee">0.00000</div>
<div class="trk" style="left:1185px;top:682px;width:374px"></div>
<div class="hnd" style="left:1185px;top:679px"></div>
<svg class="clr" style="left:1565px;top:679px" viewBox="0 0 15 10"><path d="M0.5,5 L4.5,0.5 H14.5 V9.5 H4.5 Z" fill="#4a4a4a"/><path d="M7,2.3 L12,7.7 M12,2.3 L7,7.7" stroke="#e8e8e8" stroke-width="1.8"/></svg>

<div class="lbl r" style="left:980px;width:112px;top:703px">Highlights:</div>
<div class="tf" style="left:1097px;top:698px;width:84px">1.00000</div>
<div class="trk" style="left:1185px;top:706px;width:374px"></div>
<div class="fill" style="left:1185px;top:706px;width:370px"></div>
<div class="hnd" style="left:1548px;top:703px"></div>
<svg class="clr" style="left:1565px;top:703px" viewBox="0 0 15 10"><path d="M0.5,5 L4.5,0.5 H14.5 V9.5 H4.5 Z" fill="#4a4a4a"/><path d="M7,2.3 L12,7.7 M12,2.3 L7,7.7" stroke="#e8e8e8" stroke-width="1.8"/></svg>

<!-- footer icons -->
<svg class="a" style="left:975px;top:728px" width="614" height="20" viewBox="975 728 614 20">
 <polygon points="980,732 980,743 991,743" fill="#0659b2"/>
 <rect x="1005" y="732" width="11" height="11" fill="#0659b2"/>
 <rect x="1523" y="733" width="9" height="9" fill="none" stroke="#0659b2" stroke-width="2"/>
 <path d="M1548,733 H1553 L1557,737 V742 H1548 Z" fill="none" stroke="#0659b2" stroke-width="2"/>
 <path d="M1553,733 V737 H1557" fill="#0659b2" stroke="#0659b2" stroke-width="1.5"/>
 <path d="M1571.3,731.3 L1574.9,734.9" stroke="#0659b2" stroke-width="1.9"/>
 <polygon points="1576.5,736.5 1576.5,732.5 1572.5,736.5" fill="#0659b2"/>
 <path d="M1571.3,743.7 L1574.9,740.1" stroke="#0659b2" stroke-width="1.9"/>
 <polygon points="1576.5,738.5 1576.5,742.5 1572.5,738.5" fill="#0659b2"/>
 <path d="M1583.7,731.3 L1580.1,734.9" stroke="#0659b2" stroke-width="1.9"/>
 <polygon points="1578.5,736.5 1578.5,732.5 1582.5,736.5" fill="#0659b2"/>
 <path d="M1583.7,743.7 L1580.1,740.1" stroke="#0659b2" stroke-width="1.9"/>
 <polygon points="1578.5,738.5 1578.5,742.5 1582.5,738.5" fill="#0659b2"/>
</svg>
<div class="a" style="left:971px;top:319px;width:211px;height:430px;background:rgba(0,0,0,0.03)"></div>
</body></html>
